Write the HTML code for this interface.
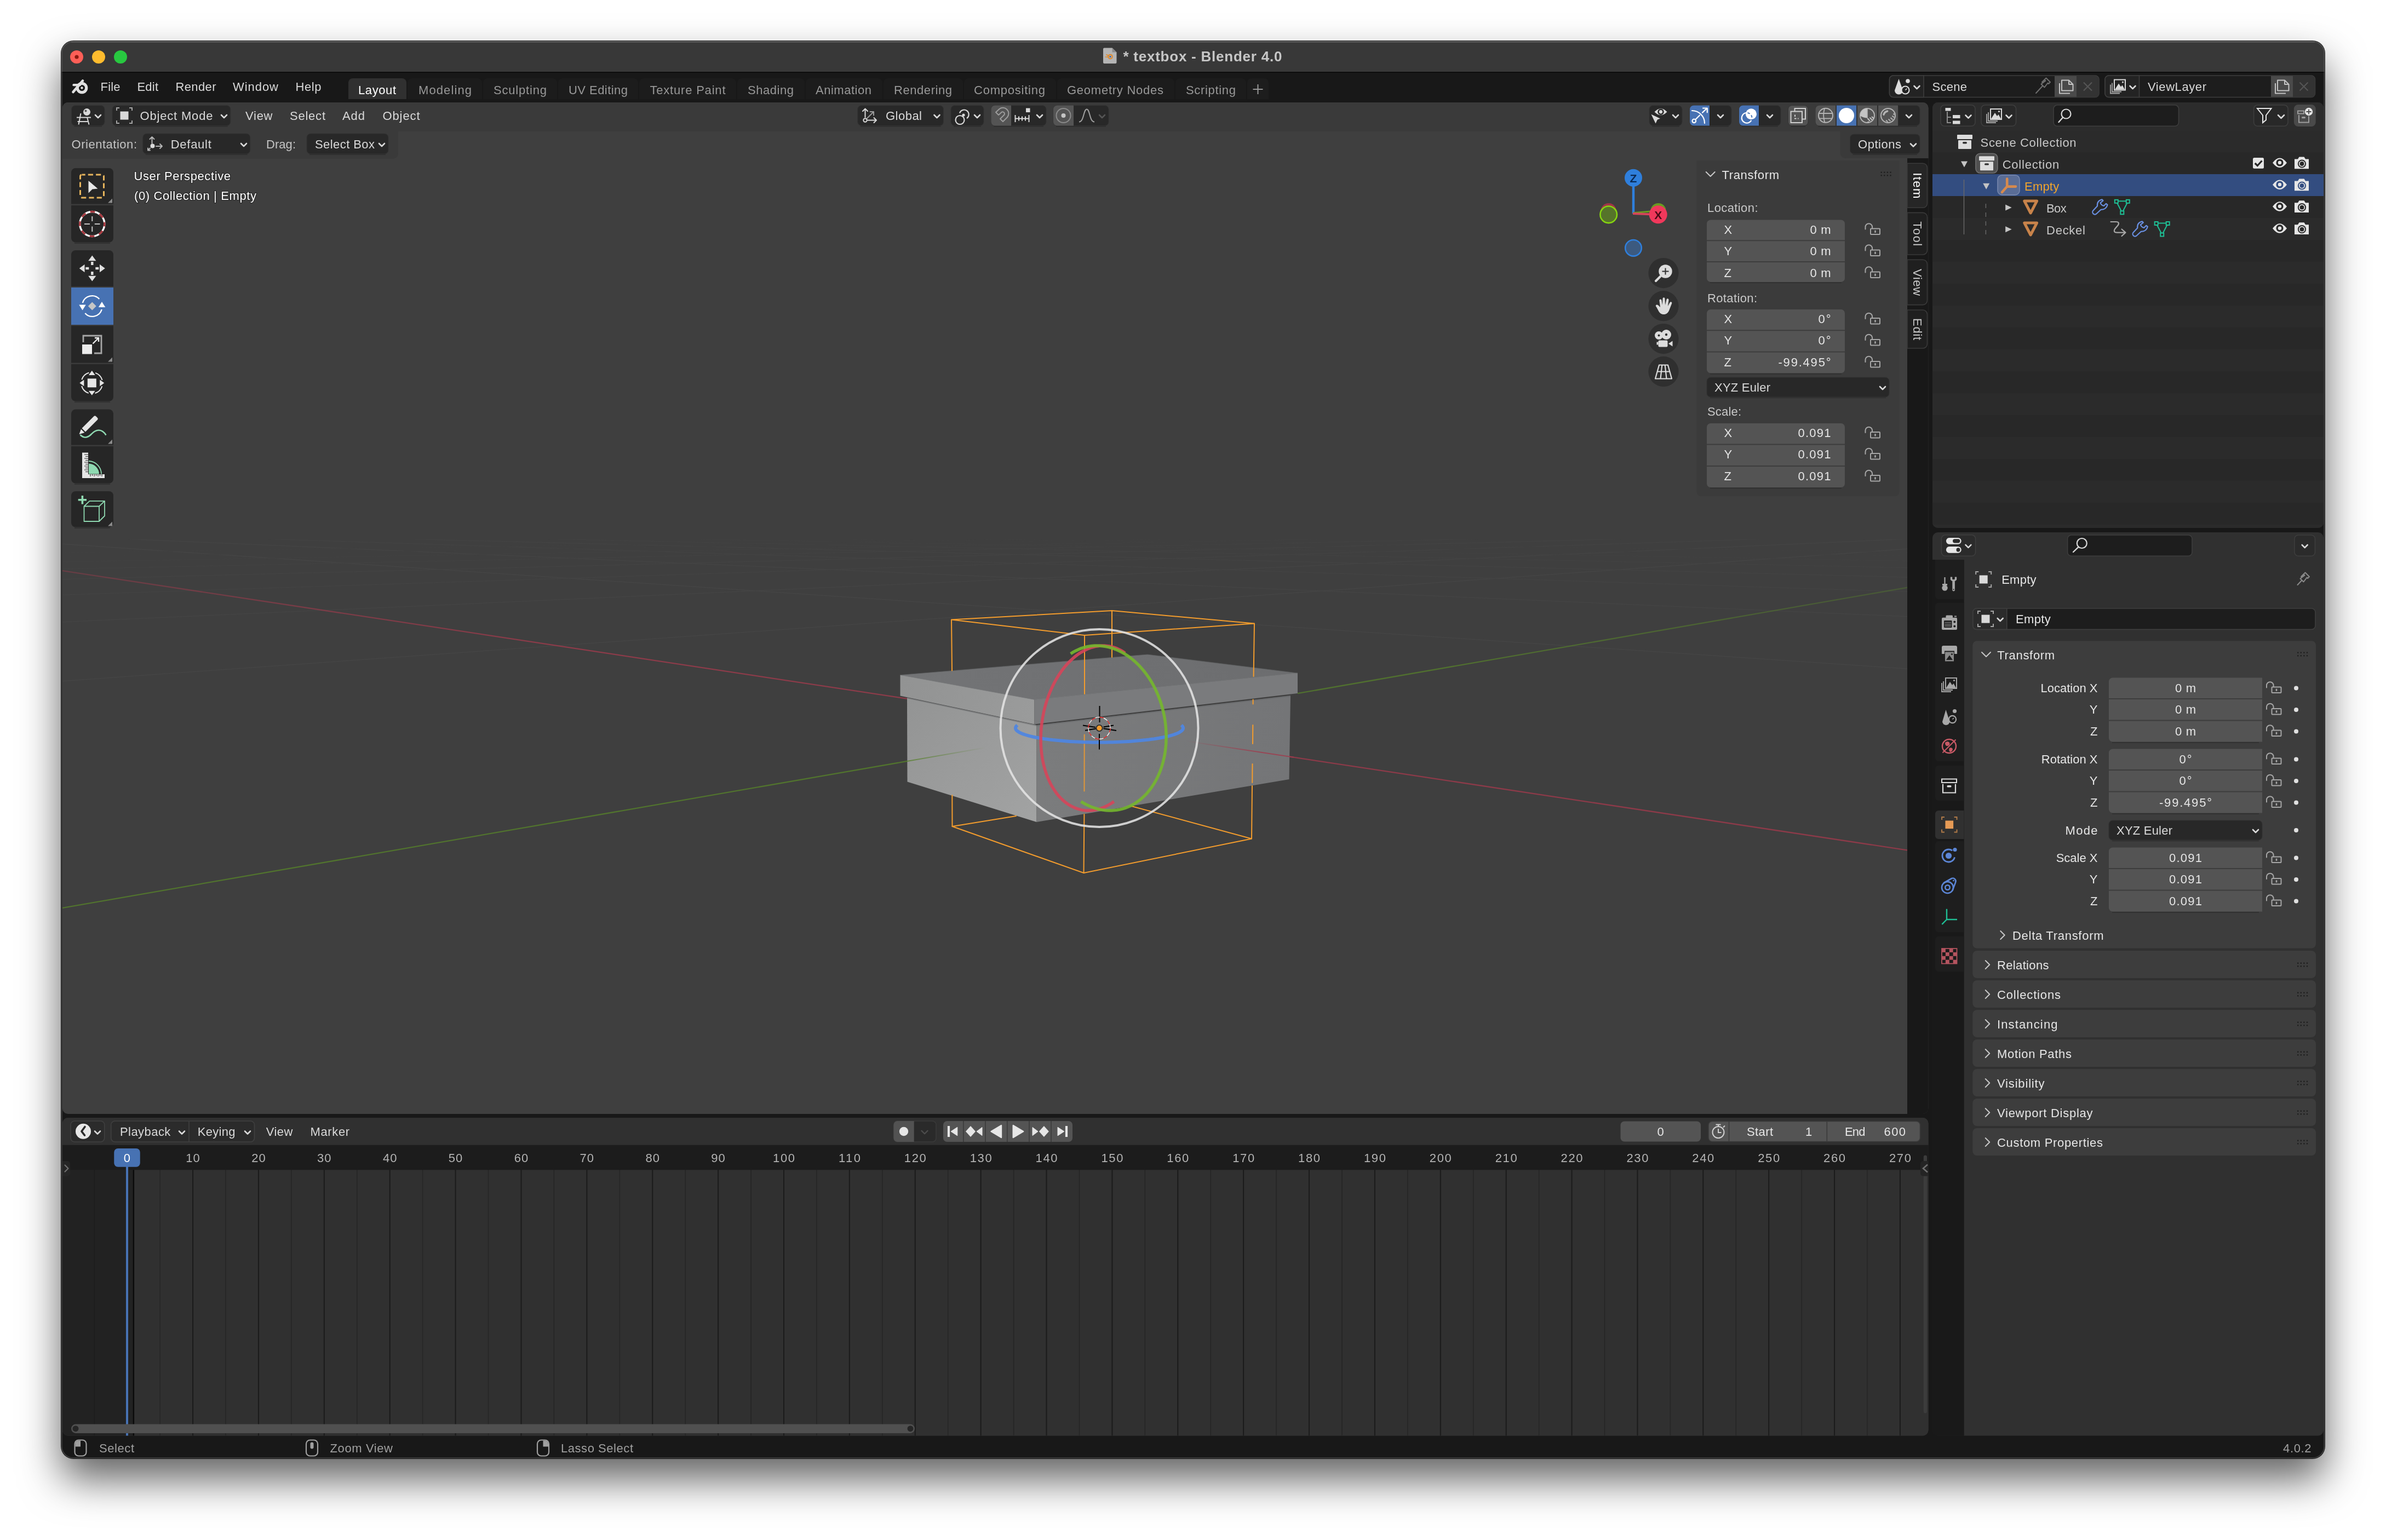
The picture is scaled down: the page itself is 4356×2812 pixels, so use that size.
<!DOCTYPE html>
<html><head><meta charset="utf-8"><title>textbox - Blender 4.0</title>
<style>
html,body{margin:0;padding:0;background:#fff;}
body{width:4356px;height:2812px;position:relative;overflow:hidden;}
#shadow{position:absolute;left:112px;top:75px;width:4132px;height:2588px;border-radius:22px;
 box-shadow:0 0 0 1px rgba(0,0,0,0.85), 0 38px 74px rgba(0,0,0,0.62);background:#181818;}
svg{position:absolute;left:0;top:0;font-family:"Liberation Sans",sans-serif;will-change:transform;}
</style></head><body>
<div id="shadow"></div>
<svg width="4356" height="2812" viewBox="0 0 4356 2812">
<defs><clipPath id="win"><rect x="112" y="75" width="4132" height="2588" rx="22"/></clipPath></defs>
<g clip-path="url(#win)">
<rect x="112" y="75" width="4132" height="2588" fill="#181818" />
<rect x="112" y="75" width="4132" height="57" fill="#383838" />
<line x1="112" y1="132" x2="4244" y2="132" stroke="#0d0d0d" stroke-width="2" />
<circle cx="140" cy="104" r="12" fill="#fe5f57" />
<circle cx="140" cy="104" r="3.6" fill="#8c1a10" />
<circle cx="180" cy="104" r="12" fill="#febc2e" />
<circle cx="220" cy="104" r="12" fill="#28c840" />
<path d="M2016 87.6 h14.5 l8 8 v18.4 a2 2 0 0 1 -2 2 h-20.5 a2 2 0 0 1 -2 -2 v-24.4 a2 2 0 0 1 2 -2 z" fill="#b4b4b4" />
<path d="M2030.5 87.6 l8 8 h-8 z" fill="#8a8a8a" />
<circle cx="2027" cy="103.5" r="3.7" fill="none" stroke="#e08a2c" stroke-width="2.2" />
<path d="M2017.5 104 h6 M2019.5 99.5 l5.5 3" fill="none" stroke="#e08a2c" stroke-width="1.7" />
<circle cx="2027" cy="103.5" r="1.5" fill="#2d5fa8" />
<text x="2050.4" y="111.5" font-size="26" fill="#c6c6c6" textLength="290" lengthAdjust="spacing" font-weight="bold" >* textbox - Blender 4.0</text>
<line x1="130" y1="76.6" x2="4226" y2="76.6" stroke="#787878" stroke-width="1.4" opacity="0.8" />
<g fill="none" stroke="#e0e0e0" stroke-linecap="round">
<circle cx="149.5" cy="160.5" r="8.2" fill="none" stroke="#e0e0e0" stroke-width="5.2" />
<circle cx="149.5" cy="160.5" r="2.2" fill="#e0e0e0" stroke="none" stroke-width="0" />
<path d="M133.5 168 L151 147.5" fill="none" stroke="#e0e0e0" stroke-width="4.6" />
<path d="M134.5 155.2 H146" fill="none" stroke="#e0e0e0" stroke-width="4.2" />
</g>
<text x="183.5" y="166" font-size="22" fill="#d9d9d9" textLength="36" lengthAdjust="spacing" >File</text>
<text x="250.5" y="166" font-size="22" fill="#d9d9d9" textLength="38.5" lengthAdjust="spacing" >Edit</text>
<text x="320.5" y="166" font-size="22" fill="#d9d9d9" textLength="74" lengthAdjust="spacing" >Render</text>
<text x="425" y="166" font-size="22" fill="#d9d9d9" textLength="83" lengthAdjust="spacing" >Window</text>
<text x="539.5" y="166" font-size="22" fill="#d9d9d9" textLength="47" lengthAdjust="spacing" >Help</text>
<path d="M636 181 V151 a8 8 0 0 1 8 -8 H734 a8 8 0 0 1 8 8 V181 z" fill="#303030" />
<text x="654" y="172" font-size="22" fill="#ffffff" textLength="69" lengthAdjust="spacing" >Layout</text>
<path d="M744 181 V151 a8 8 0 0 1 8 -8 H872 a8 8 0 0 1 8 8 V181 z" fill="#1c1c1c" />
<text x="764" y="172" font-size="22" fill="#989898" textLength="97" lengthAdjust="spacing" >Modeling</text>
<path d="M882 181 V151 a8 8 0 0 1 8 -8 H1009 a8 8 0 0 1 8 8 V181 z" fill="#1c1c1c" />
<text x="901" y="172" font-size="22" fill="#989898" textLength="97" lengthAdjust="spacing" >Sculpting</text>
<path d="M1019 181 V151 a8 8 0 0 1 8 -8 H1157 a8 8 0 0 1 8 8 V181 z" fill="#1c1c1c" />
<text x="1038" y="172" font-size="22" fill="#989898" textLength="108" lengthAdjust="spacing" >UV Editing</text>
<path d="M1167 181 V151 a8 8 0 0 1 8 -8 H1336 a8 8 0 0 1 8 8 V181 z" fill="#1c1c1c" />
<text x="1186.5" y="172" font-size="22" fill="#989898" textLength="138" lengthAdjust="spacing" >Texture Paint</text>
<path d="M1346 181 V151 a8 8 0 0 1 8 -8 H1461 a8 8 0 0 1 8 8 V181 z" fill="#1c1c1c" />
<text x="1365" y="172" font-size="22" fill="#989898" textLength="84" lengthAdjust="spacing" >Shading</text>
<path d="M1471 181 V151 a8 8 0 0 1 8 -8 H1603 a8 8 0 0 1 8 8 V181 z" fill="#1c1c1c" />
<text x="1489" y="172" font-size="22" fill="#989898" textLength="102" lengthAdjust="spacing" >Animation</text>
<path d="M1613 181 V151 a8 8 0 0 1 8 -8 H1750 a8 8 0 0 1 8 8 V181 z" fill="#1c1c1c" />
<text x="1632" y="172" font-size="22" fill="#989898" textLength="106" lengthAdjust="spacing" >Rendering</text>
<path d="M1760 181 V151 a8 8 0 0 1 8 -8 H1920 a8 8 0 0 1 8 8 V181 z" fill="#1c1c1c" />
<text x="1778" y="172" font-size="22" fill="#989898" textLength="130" lengthAdjust="spacing" >Compositing</text>
<path d="M1930 181 V151 a8 8 0 0 1 8 -8 H2136 a8 8 0 0 1 8 8 V181 z" fill="#1c1c1c" />
<text x="1948" y="172" font-size="22" fill="#989898" textLength="176" lengthAdjust="spacing" >Geometry Nodes</text>
<path d="M2146 181 V151 a8 8 0 0 1 8 -8 H2267 a8 8 0 0 1 8 8 V181 z" fill="#1c1c1c" />
<text x="2165" y="172" font-size="22" fill="#989898" textLength="91" lengthAdjust="spacing" >Scripting</text>
<path d="M2277 181 V151 a8 8 0 0 1 8 -8 H2308 a8 8 0 0 1 8 8 V181 z" fill="#1d1d1d" />
<path d="M2287.5 163 h18 M2296.5 154 v18" fill="none" stroke="#989898" stroke-width="2" />
<defs><clipPath id="v3d"><rect x="114" y="187" width="3406.5" height="1847" rx="10"/></clipPath><clipPath id="tl"><rect x="114" y="2041" width="3406.5" height="580.5" rx="10"/></clipPath><clipPath id="ol"><rect x="3528" y="187" width="714" height="777" rx="10"/></clipPath><clipPath id="pr"><rect x="3528" y="972" width="714" height="1649.5" rx="10"/></clipPath></defs>
<rect x="114" y="187" width="3406.5" height="1847" fill="#3f3f3f" rx="10" />
<g clip-path="url(#ol)">
<rect x="3528" y="187" width="714" height="777" fill="#282828" />
<rect x="3528" y="280" width="714" height="40" fill="#2b2b2b" />
<rect x="3528" y="360" width="714" height="40" fill="#2b2b2b" />
<rect x="3528" y="440" width="714" height="40" fill="#2b2b2b" />
<rect x="3528" y="520" width="714" height="40" fill="#2b2b2b" />
<rect x="3528" y="600" width="714" height="40" fill="#2b2b2b" />
<rect x="3528" y="680" width="714" height="40" fill="#2b2b2b" />
<rect x="3528" y="760" width="714" height="40" fill="#2b2b2b" />
<rect x="3528" y="840" width="714" height="40" fill="#2b2b2b" />
<rect x="3528" y="920" width="714" height="40" fill="#2b2b2b" />
<rect x="3528" y="187" width="714" height="53" fill="#303030" />
</g>
<g clip-path="url(#pr)">
<rect x="3528" y="972" width="714" height="1650" fill="#303030" />
<rect x="3528" y="1022" width="57.5" height="1600" fill="#1c1c1c" />
</g>
<g clip-path="url(#tl)">
<rect x="114" y="2041" width="3407" height="581" fill="#2f2f2f" />
</g>
<rect x="136.5" y="2629.5" width="21" height="29" fill="none" rx="7" stroke="#a0a0a0" stroke-width="2.2" />
<path d="M137.5 2641.5 V2636.5 a6 6 0 0 1 6 -6 h3.5 v11 z" fill="#a0a0a0" />
<text x="181" y="2652" font-size="22" fill="#a0a0a0" textLength="64" lengthAdjust="spacing" >Select</text>
<rect x="559" y="2629.5" width="21" height="29" fill="none" rx="7" stroke="#a0a0a0" stroke-width="2.2" />
<rect x="566.5" y="2633.5" width="6" height="12" fill="#a0a0a0" rx="3" />
<text x="602.5" y="2652" font-size="22" fill="#a0a0a0" textLength="114.5" lengthAdjust="spacing" >Zoom View</text>
<rect x="981" y="2629.5" width="21" height="29" fill="none" rx="7" stroke="#a0a0a0" stroke-width="2.2" />
<path d="M1001 2641.5 V2636.5 a6 6 0 0 0 -6 -6 h-3.5 v11 z" fill="#a0a0a0" />
<text x="1024" y="2652" font-size="22" fill="#a0a0a0" textLength="132" lengthAdjust="spacing" >Lasso Select</text>
<text x="4168" y="2652" font-size="22" fill="#a0a0a0" textLength="51.5" lengthAdjust="spacing" >4.0.2</text>
<g clip-path="url(#v3d)">
<defs><clipPath id="belowhz"><rect x="100" y="985" width="3440" height="1100"/></clipPath></defs>
<g clip-path="url(#belowhz)">
<line x1="100" y1="1244.71" x2="3530" y2="998.931" stroke="#454545" stroke-width="1.5" />
<line x1="100" y1="992.42" x2="3530" y2="1224.34" stroke="#454545" stroke-width="1.5" />
<line x1="100" y1="1136.45" x2="3530" y2="981.885" stroke="#444444" stroke-width="1.5" />
<line x1="100" y1="978.399" x2="3530" y2="1127.83" stroke="#444444" stroke-width="1.5" />
<line x1="100" y1="1086.63" x2="3530" y2="974.041" stroke="#434343" stroke-width="1.5" />
<line x1="100" y1="971.738" x2="3530" y2="1081.98" stroke="#434343" stroke-width="1.5" />
<line x1="100" y1="1058" x2="3530" y2="969.533" stroke="#434343" stroke-width="1.5" />
<line x1="100" y1="967.845" x2="3530" y2="1055.19" stroke="#434343" stroke-width="1.5" />
<line x1="100" y1="1039.4" x2="3530" y2="966.605" stroke="#424242" stroke-width="1.5" />
<line x1="100" y1="965.293" x2="3530" y2="1037.62" stroke="#424242" stroke-width="1.5" />
<line x1="100" y1="1026.35" x2="3530" y2="964.55" stroke="#414141" stroke-width="1.5" />
<line x1="100" y1="963.49" x2="3530" y2="1025.21" stroke="#414141" stroke-width="1.5" />
<line x1="100" y1="1016.69" x2="3530" y2="963.029" stroke="#404040" stroke-width="1.5" />
<line x1="100" y1="962.149" x2="3530" y2="1015.97" stroke="#404040" stroke-width="1.5" />
<line x1="100" y1="1009.25" x2="3530" y2="961.857" stroke="#404040" stroke-width="1.5" />
<line x1="100" y1="961.112" x2="3530" y2="1008.84" stroke="#404040" stroke-width="1.5" />
</g>
<defs><linearGradient id="gfade" gradientUnits="userSpaceOnUse" x1="1640" y1="0" x2="1800" y2="0"><stop offset="0" stop-color="#56802a" stop-opacity="0.85"/><stop offset="1" stop-color="#56802a" stop-opacity="0"/></linearGradient><linearGradient id="rfade" gradientUnits="userSpaceOnUse" x1="2165" y1="0" x2="2300" y2="0"><stop offset="0" stop-color="#a03a4c" stop-opacity="0"/><stop offset="1" stop-color="#a03a4c" stop-opacity="0.8"/></linearGradient></defs>
<defs><linearGradient id="rl" gradientUnits="userSpaceOnUse" x1="100" y1="0" x2="1658" y2="0"><stop offset="0" stop-color="#a03a4c" stop-opacity="0.4"/><stop offset="0.6" stop-color="#a03a4c" stop-opacity="0.8"/></linearGradient><linearGradient id="gr" gradientUnits="userSpaceOnUse" x1="2369" y1="0" x2="3530" y2="0"><stop offset="0.25" stop-color="#56802a" stop-opacity="0.75"/><stop offset="1" stop-color="#56802a" stop-opacity="0.35"/></linearGradient></defs>
<line x1="100" y1="1040.09" x2="1658" y2="1276.13" stroke="url(#rl)" stroke-width="2.3" />
<line x1="2300" y1="1373.39" x2="3530" y2="1559.73" stroke="#a03a4c" stroke-width="2.3" opacity="0.8" />
<line x1="100" y1="1660.25" x2="1656" y2="1389.97" stroke="#56802a" stroke-width="2.3" opacity="0.8" />
<line x1="2369" y1="1266.12" x2="3530" y2="1064.45" stroke="url(#gr)" stroke-width="2.3" />
<defs><linearGradient id="ltop" x1="0" y1="0" x2="1" y2="0"><stop offset="0" stop-color="#737476"/><stop offset="1" stop-color="#6c6d6f"/></linearGradient><linearGradient id="lleft" x1="0" y1="0" x2="1" y2="0"><stop offset="0" stop-color="#929393"/><stop offset="1" stop-color="#9a9b9b"/></linearGradient><linearGradient id="bleft" x1="0" y1="0" x2="1" y2="1"><stop offset="0" stop-color="#939494"/><stop offset="1" stop-color="#a2a3a3"/></linearGradient><linearGradient id="bright" x1="0" y1="0" x2="1" y2="0"><stop offset="0" stop-color="#7b7c7d"/><stop offset="1" stop-color="#747577"/></linearGradient></defs>
<path d="M1656 1274 L1892.5 1324 L1892.5 1501 L1656.5 1427.5 Z" fill="url(#bleft)" />
<path d="M1892.5 1324 L2356 1270 L2353.5 1423 L1892.5 1501 Z" fill="url(#bright)" />
<path d="M1656 1274.5 L1892.5 1325 L2356 1271" fill="none" stroke="#606163" stroke-width="2.2" opacity="0.42" />
<path d="M1643.5 1232.5 L2095 1195 L2369 1229 L1888.5 1277.5 Z" fill="url(#ltop)" />
<path d="M1643.5 1232.5 L1888.5 1277.5 L1888.5 1322.5 L1643.5 1270.5 Z" fill="url(#lleft)" />
<path d="M1888.5 1277.5 L2369 1229 L2369 1266 L1888.5 1322.5 Z" fill="#7a7b7d" />
<path d="M1643.5 1232.5 L1888.5 1277.5 L2369 1229" fill="none" stroke="#7d7e80" stroke-width="1.2" opacity="0.6" />
<path d="M1643.5 1232.5 L2095 1195 L2369 1229" fill="none" stroke="#5a5b5c" stroke-width="1.2" opacity="0.7" />
<line x1="1656" y1="1389.97" x2="1800" y2="1364.96" stroke="url(#gfade)" stroke-width="2" />
<line x1="2165" y1="1352.94" x2="2362" y2="1382.78" stroke="url(#rfade)" stroke-width="2" />
<g stroke="#f39c2d" stroke-width="2" fill="none" stroke-linecap="round">
<path d="M1737 1131.5 L2030 1115 L2290 1138.5 L1980 1160 Z"/>
<path d="M1737 1131.5 L1738 1224.5 M1738.3 1452 L1738.5 1509"/>
<path d="M2030 1115 L2030 1200"/>
<path d="M1980 1160 L1980 1267 M1979.4 1487 L1978.5 1594"/>
<path d="M1979.7 1341.5 L1979.5 1444.5" opacity="0.85"/>
<path d="M2290 1138.5 L2288.6 1235 M2287.6 1277.5 V1285.5 M2287.3 1324 L2287 1358 M2286.5 1395 L2286.2 1429 M2286 1435 L2285 1531.5"/>
<path d="M1738.5 1509 L1978.5 1594 L2285 1531.5 L2064.7 1471.7 M1738.5 1509 L1855 1490"/>
</g>
<path d="M2156.7 1324.1 L2157.8 1325.1 L2158.7 1326.1 L2159.4 1327.1 L2159.8 1328.2 L2160.0 1329.2 L2159.9 1330.2 L2159.7 1331.3 L2159.1 1332.3 L2158.4 1333.3 L2157.4 1334.3 L2156.1 1335.3 L2154.6 1336.3 L2152.9 1337.3 L2151.0 1338.3 L2148.9 1339.2 L2146.5 1340.2 L2143.9 1341.1 L2141.1 1342.0 L2138.1 1342.9 L2134.8 1343.8 L2131.4 1344.6 L2127.8 1345.5 L2124.0 1346.3 L2120.0 1347.0 L2115.8 1347.8 L2111.5 1348.5 L2107.0 1349.2 L2102.3 1349.8 L2097.5 1350.5 L2092.6 1351.1 L2087.5 1351.6 L2082.3 1352.1 L2076.9 1352.6 L2071.5 1353.1 L2066.0 1353.5 L2060.3 1353.9 L2054.6 1354.2 L2048.8 1354.5 L2043.0 1354.8 L2037.1 1355.0 L2031.1 1355.2 L2025.1 1355.3 L2019.1 1355.4 L2013.1 1355.5 L2007.0 1355.5 L2000.9 1355.5 L1994.9 1355.4 L1988.9 1355.3 L1982.9 1355.2 L1976.9 1355.0 L1971.0 1354.8 L1965.2 1354.5 L1959.4 1354.2 L1953.7 1353.9 L1948.0 1353.5 L1942.5 1353.1 L1937.1 1352.6 L1931.7 1352.1 L1926.5 1351.6 L1921.4 1351.1 L1916.5 1350.5 L1911.7 1349.8 L1907.0 1349.2 L1902.5 1348.5 L1898.2 1347.8 L1894.0 1347.0 L1890.0 1346.3 L1886.2 1345.5 L1882.6 1344.6 L1879.2 1343.8 L1875.9 1342.9 L1872.9 1342.0 L1870.1 1341.1 L1867.5 1340.2 L1865.1 1339.2 L1863.0 1338.3 L1861.1 1337.3 L1859.4 1336.3 L1857.9 1335.3 L1856.6 1334.3 L1855.6 1333.3 L1854.9 1332.3 L1854.3 1331.3 L1854.1 1330.2 L1854.0 1329.2 L1854.2 1328.2 L1854.6 1327.1 L1855.3 1326.1 L1856.2 1325.1 L1857.3 1324.1" fill="none" stroke="#4f86e0" stroke-width="6" stroke-linecap="butt" opacity="0.95" />
<path d="M2054.0 1192.6 L2050.2 1189.9 L2046.2 1187.5 L2042.1 1185.4 L2038.0 1183.6 L2033.8 1182.1 L2029.5 1180.9 L2025.1 1180.0 L2020.7 1179.4 L2016.3 1179.0 L2011.8 1179.0 L2007.4 1179.3 L2002.9 1179.9 L1998.3 1180.8 L1993.8 1182.0 L1989.4 1183.5 L1984.9 1185.3 L1980.5 1187.4 L1976.1 1189.8 L1971.7 1192.4 L1967.4 1195.3 L1963.2 1198.5 L1959.1 1202.0 L1955.0 1205.7 L1951.0 1209.7 L1947.1 1213.9 L1943.4 1218.3 L1939.7 1223.0 L1936.2 1227.9 L1932.8 1233.0 L1929.6 1238.2 L1926.4 1243.7 L1923.5 1249.3 L1920.7 1255.1 L1918.0 1261.1 L1915.5 1267.2 L1913.2 1273.4 L1911.1 1279.7 L1909.1 1286.1 L1907.3 1292.6 L1905.7 1299.2 L1904.4 1305.9 L1903.2 1312.5 L1902.1 1319.3 L1901.3 1326.0 L1900.7 1332.8 L1900.3 1339.5 L1900.1 1346.3 L1900.1 1353.0 L1900.3 1359.6 L1900.7 1366.2 L1901.3 1372.7 L1902.1 1379.1 L1903.1 1385.5 L1904.3 1391.7 L1905.7 1397.8 L1907.3 1403.7 L1909.1 1409.5 L1911.0 1415.2 L1913.2 1420.6 L1915.5 1425.9 L1917.9 1431.0 L1920.6 1435.9 L1923.4 1440.5 L1926.4 1445.0 L1929.5 1449.2 L1932.7 1453.2 L1936.1 1456.9 L1939.7 1460.4 L1943.3 1463.6 L1947.1 1466.5 L1950.9 1469.2 L1954.9 1471.5 L1959.0 1473.6 L1963.1 1475.4 L1967.3 1476.9 L1971.6 1478.1 L1976.0 1479.1 L1980.4 1479.7 L1984.8 1480.0 L1989.3 1480.0 L1993.7 1479.7 L1998.2 1479.1 L2002.8 1478.1 L2007.3 1476.9 L2011.7 1475.4 L2016.2 1473.6 L2020.6 1471.6 L2025.0 1469.2 L2029.4 1466.5 L2033.7 1463.6" fill="none" stroke="#d6455a" stroke-width="5.5" opacity="0.9" />
<path d="M1954.6 1193.7 L1959.0 1190.9 L1963.6 1188.4 L1968.3 1186.2 L1973.1 1184.2 L1977.9 1182.6 L1982.8 1181.3 L1987.8 1180.3 L1992.9 1179.5 L1998.0 1179.1 L2003.1 1179.0 L2008.3 1179.2 L2013.4 1179.7 L2018.6 1180.5 L2023.8 1181.6 L2028.9 1183.0 L2034.0 1184.7 L2039.1 1186.7 L2044.1 1189.0 L2049.1 1191.6 L2054.0 1194.4 L2058.8 1197.6 L2063.5 1200.9 L2068.1 1204.6 L2072.6 1208.5 L2077.0 1212.7 L2081.3 1217.1 L2085.4 1221.7 L2089.4 1226.5 L2093.2 1231.6 L2096.9 1236.8 L2100.4 1242.3 L2103.8 1247.9 L2106.9 1253.7 L2109.9 1259.6 L2112.6 1265.7 L2115.2 1271.9 L2117.6 1278.2 L2119.7 1284.7 L2121.7 1291.2 L2123.4 1297.8 L2124.9 1304.4 L2126.2 1311.2 L2127.2 1317.9 L2128.1 1324.7 L2128.6 1331.5 L2129.0 1338.3 L2129.1 1345.0 L2129.0 1351.7 L2128.7 1358.4 L2128.1 1365.1 L2127.3 1371.6 L2126.3 1378.1 L2125.0 1384.5 L2123.5 1390.7 L2121.8 1396.8 L2119.9 1402.8 L2117.8 1408.7 L2115.4 1414.4 L2112.9 1419.9 L2110.1 1425.2 L2107.2 1430.4 L2104.0 1435.3 L2100.7 1440.0 L2097.2 1444.5 L2093.6 1448.8 L2089.8 1452.8 L2085.8 1456.5 L2081.7 1460.1 L2077.4 1463.3 L2073.0 1466.3 L2068.5 1469.0 L2063.9 1471.4 L2059.2 1473.5 L2054.4 1475.3 L2049.5 1476.8 L2044.5 1478.1 L2039.5 1479.0 L2034.5 1479.6 L2029.4 1480.0 L2024.2 1480.0 L2019.1 1479.7 L2013.9 1479.1 L2008.7 1478.2 L2003.6 1477.0 L1998.4 1475.5 L1993.3 1473.7 L1988.3 1471.6 L1983.3 1469.2 L1978.3 1466.5 L1973.5 1463.6" fill="none" stroke="#74b72e" stroke-width="5.5" opacity="0.9" />
<circle cx="2007" cy="1329.5" r="180.5" fill="none" stroke="#e4e4e4" stroke-width="4" opacity="0.88" />
<g stroke="#000" stroke-width="2" fill="none">
<path d="M2007.5 1289 V1319 M2007 1340 V1368.5"/>
<path d="M1977 1324.5 L2000 1328 M1981 1333.7 L2001 1330.5 M2014.5 1327.5 L2033 1324.5 M2014.5 1330.3 L2038 1334"/>
</g>
<circle cx="2007" cy="1329.5" r="20" fill="none" stroke="#ffffff" stroke-width="1.3" />
<circle cx="2007" cy="1329.5" r="20" fill="none" stroke="#e01010" stroke-width="1.3" stroke-dasharray="7.85 7.85"/>
<circle cx="2007" cy="1329.5" r="5.6" fill="#f39c2d" stroke="#2a2a2a" stroke-width="1.8" />
</g>
<g clip-path="url(#v3d)">
<rect x="114" y="187" width="3407" height="53" fill="#3a3a3a" />
<path d="M114 240 H727 V280 a10 10 0 0 1 -10 10 H114 Z" fill="#3a3a3a" />
<path d="M3521 240 H3359.5 V279 a10 10 0 0 0 10 10 H3521 Z" fill="#3a3a3a" />
<rect x="3482" y="289" width="39" height="1746" fill="#181818" />
</g>
<rect x="130.5" y="192.5" width="60.5" height="37" fill="#282828" rx="7" stroke="#333333" stroke-width="1" />
<line x1="135.5" y1="230.7" x2="186" y2="230.7" stroke="#2a2a2a" stroke-width="1.5" opacity="0.8" />
<g stroke="#d9d9d9" stroke-width="2" fill="none">
<path d="M140 214.5 H166 M141.5 222 H160 M147.5 207 L143.5 227.5 M159 214 L162.5 227.5"/>
</g>
<circle cx="158.5" cy="204.5" r="6.5" fill="#d9d9d9" />
<circle cx="156.5" cy="202.5" r="2" fill="#555" />
<path d="M174 210 L179 215 L184 210" fill="none" stroke="#d9d9d9" stroke-width="2.6" stroke-linecap="round" stroke-linejoin="round" />
<rect x="205" y="192.5" width="215.75" height="37" fill="#282828" rx="7" stroke="#333333" stroke-width="1" />
<line x1="210" y1="230.7" x2="415.75" y2="230.7" stroke="#2a2a2a" stroke-width="1.5" opacity="0.8" />
<path d="M213.0 202.0 V197.0 H218.0 M236.0 197.0 H241.0 V202.0 M241.0 220.0 V225.0 H236.0 M218.0 225.0 H213.0 V220.0" fill="none" stroke="#a4a4a4" stroke-width="2" />
<rect x="219.5" y="203.5" width="15" height="15" fill="#d9d9d9" />
<text x="255.5" y="219" font-size="22" fill="#d9d9d9" textLength="133" lengthAdjust="spacing" >Object Mode</text>
<path d="M404 210 L409 215 L414 210" fill="none" stroke="#d9d9d9" stroke-width="2.6" stroke-linecap="round" stroke-linejoin="round" />
<text x="448" y="219" font-size="22" fill="#d9d9d9" textLength="49.5" lengthAdjust="spacing" >View</text>
<text x="529" y="219" font-size="22" fill="#d9d9d9" textLength="65" lengthAdjust="spacing" >Select</text>
<text x="625" y="219" font-size="22" fill="#d9d9d9" textLength="41" lengthAdjust="spacing" >Add</text>
<text x="698.5" y="219" font-size="22" fill="#d9d9d9" textLength="68" lengthAdjust="spacing" >Object</text>
<text x="130.5" y="271" font-size="22" fill="#c4c4c4" textLength="119.5" lengthAdjust="spacing" >Orientation:</text>
<rect x="260.75" y="244" width="196" height="37" fill="#282828" rx="7" stroke="#333333" stroke-width="1" />
<line x1="265.75" y1="282.2" x2="451.75" y2="282.2" stroke="#2a2a2a" stroke-width="1.5" opacity="0.8" />
<g stroke="#b5b5b5" stroke-width="2" fill="none" stroke-linecap="round" stroke-linejoin="round">
<path d="M277.5 262 V250 M273.5 254 L277.5 250 L281.5 254 M285 267 H296 M292 263 L296 267 L292 271 M274 270.5 L270 274.5 M270 270.5 V274.5 H274"/>
</g>
<circle cx="278.5" cy="266.5" r="4" fill="#d9d9d9" />
<text x="311.75" y="271" font-size="22" fill="#d9d9d9" textLength="74" lengthAdjust="spacing" >Default</text>
<path d="M440 262 L445 267 L450 262" fill="none" stroke="#d9d9d9" stroke-width="2.6" stroke-linecap="round" stroke-linejoin="round" />
<text x="486" y="271" font-size="22" fill="#c4c4c4" textLength="54" lengthAdjust="spacing" >Drag:</text>
<rect x="560" y="244" width="149" height="37" fill="#282828" rx="7" stroke="#333333" stroke-width="1" />
<line x1="565" y1="282.2" x2="704" y2="282.2" stroke="#2a2a2a" stroke-width="1.5" opacity="0.8" />
<text x="575" y="271" font-size="22" fill="#d9d9d9" textLength="109" lengthAdjust="spacing" >Select Box</text>
<path d="M692 262 L697 267 L702 262" fill="none" stroke="#d9d9d9" stroke-width="2.6" stroke-linecap="round" stroke-linejoin="round" />
<rect x="1565.75" y="192.5" width="156.75" height="37" fill="#282828" rx="7" stroke="#333333" stroke-width="1" />
<line x1="1570.75" y1="230.7" x2="1717.5" y2="230.7" stroke="#2a2a2a" stroke-width="1.5" opacity="0.8" />
<g stroke="#d9d9d9" stroke-width="2" fill="none" stroke-linecap="round" stroke-linejoin="round">
<path d="M1579.5 214 V198.5 M1575 203 L1579.5 198.5 L1584 203 M1584 219.5 H1600 M1595.5 215 L1600 219.5 L1595.5 224"/>
<path d="M1583 216 L1594.5 204.5 M1588.5 204 H1595 V210.5" stroke="#9a9a9a"/>
</g>
<circle cx="1579.5" cy="219.5" r="3.2" fill="#282828" stroke="#d9d9d9" stroke-width="2" />
<text x="1617" y="219" font-size="22" fill="#d9d9d9" textLength="66" lengthAdjust="spacing" >Global</text>
<path d="M1705.5 210 L1710.5 215 L1715.5 210" fill="none" stroke="#d9d9d9" stroke-width="2.6" stroke-linecap="round" stroke-linejoin="round" />
<rect x="1736" y="192.5" width="60" height="37" fill="#282828" rx="7" stroke="#333333" stroke-width="1" />
<line x1="1741" y1="230.7" x2="1791" y2="230.7" stroke="#2a2a2a" stroke-width="1.5" opacity="0.8" />
<circle cx="1752.5" cy="219" r="8" fill="none" stroke="#d9d9d9" stroke-width="2.2" />
<path d="M1752 206.5 A8.5 8.5 0 1 1 1765 216" fill="none" stroke="#d9d9d9" stroke-width="2.2" />
<circle cx="1759" cy="210" r="2.6" fill="#d9d9d9" />
<path d="M1779 210 L1784 215 L1789 210" fill="none" stroke="#d9d9d9" stroke-width="2.6" stroke-linecap="round" stroke-linejoin="round" />
<rect x="1809.5" y="192.5" width="100.5" height="37" fill="#282828" rx="7" stroke="#333333" stroke-width="1" />
<line x1="1814.5" y1="230.7" x2="1905" y2="230.7" stroke="#2a2a2a" stroke-width="1.5" opacity="0.8" />
<path d="M1809.5 199.5 a7 7 0 0 1 7 -7 H1846 V229.5 H1816.5 a7 7 0 0 1 -7 -7 Z" fill="#545454" />
<line x1="1846.5" y1="192.5" x2="1846.5" y2="229.5" stroke="#2a2a2a" stroke-width="1" />
<path d="M1818 205 L1824.5 199 a10.5 10.5 0 0 1 14.5 15 L1831 222 L1826 217 L1833.5 209.5 a3.6 3.6 0 0 0 -4.5 -5 L1823 210 Z" fill="none" stroke="#9c9c9c" stroke-width="2" stroke-linejoin="round" />
<g stroke="#d9d9d9" stroke-width="2" fill="none">
<path d="M1853.5 216.5 H1878.5 M1853.5 210 V223 M1860 212.5 V220.5 M1866 212.5 V220.5 M1872 212.5 V220.5 M1878.5 210 V223"/>
</g>
<rect x="1873" y="197.5" width="7.5" height="7.5" fill="#d9d9d9" />
<path d="M1893 210 L1898 215 L1903 210" fill="none" stroke="#d9d9d9" stroke-width="2.6" stroke-linecap="round" stroke-linejoin="round" />
<rect x="1923" y="192.5" width="101" height="37" fill="#282828" rx="7" stroke="#333333" stroke-width="1" />
<line x1="1928" y1="230.7" x2="2019" y2="230.7" stroke="#2a2a2a" stroke-width="1.5" opacity="0.8" />
<path d="M1923 199.5 a7 7 0 0 1 7 -7 H1960 V229.5 H1930 a7 7 0 0 1 -7 -7 Z" fill="#545454" />
<line x1="1960.5" y1="192.5" x2="1960.5" y2="229.5" stroke="#2a2a2a" stroke-width="1" />
<circle cx="1941.5" cy="211" r="13" fill="none" stroke="#8a8a8a" stroke-width="2" />
<circle cx="1941.5" cy="211" r="4" fill="#c4c4c4" />
<path d="M1970 222.5 C1979 222.5 1978 199.5 1984 199.5 C1990 199.5 1989 222.5 1998 222.5" fill="none" stroke="#a0a0a0" stroke-width="2" />
<path d="M2007 210 L2012 215 L2017 210" fill="none" stroke="#555555" stroke-width="2.6" stroke-linecap="round" stroke-linejoin="round" />
<rect x="3011" y="192.5" width="60" height="37" fill="#282828" rx="7" stroke="#333333" stroke-width="1" />
<line x1="3016" y1="230.7" x2="3066" y2="230.7" stroke="#2a2a2a" stroke-width="1.5" opacity="0.8" />
<path d="M3020.5 204.3 Q3032 192.3 3043.5 204.3 Q3032 216.3 3020.5 204.3 Z" fill="#d9d9d9" />
<circle cx="3032" cy="204.2" r="5.7" fill="#282828" />
<circle cx="3032" cy="204.2" r="3.1" fill="#d9d9d9" />
<path d="M3014.5 208.8 L3031 216.4 L3025.8 218.6 L3022.6 225.4 Z" fill="#d9d9d9" />
<path d="M3054 210 L3059 215 L3064 210" fill="none" stroke="#d9d9d9" stroke-width="2.6" stroke-linecap="round" stroke-linejoin="round" />
<rect x="3085" y="192.5" width="76" height="37" fill="#282828" rx="7" stroke="#333333" stroke-width="1" />
<line x1="3090" y1="230.7" x2="3156" y2="230.7" stroke="#2a2a2a" stroke-width="1.5" opacity="0.8" />
<path d="M3085 199.5 a7 7 0 0 1 7 -7 H3121 V229.5 H3092 a7 7 0 0 1 -7 -7 Z" fill="#4772b3" />
<line x1="3121.5" y1="192.5" x2="3121.5" y2="229.5" stroke="#222" stroke-width="1" />
<g stroke="#ffffff" stroke-width="2.2" fill="none" stroke-linecap="round" stroke-linejoin="round">
<path d="M3089 202 A23 23 0 0 1 3112 225 M3095.3 218.3 L3103 210.5 M3108 205.6 L3116.3 197.8 M3109 197.5 H3116.8 V205.3"/>
</g>
<circle cx="3092.8" cy="220.8" r="3.3" fill="#4772b3" stroke="#ffffff" stroke-width="2.2" />
<path d="M3136 210 L3141 215 L3146 210" fill="none" stroke="#d9d9d9" stroke-width="2.6" stroke-linecap="round" stroke-linejoin="round" />
<rect x="3175" y="192.5" width="76" height="37" fill="#282828" rx="7" stroke="#333333" stroke-width="1" />
<line x1="3180" y1="230.7" x2="3246" y2="230.7" stroke="#2a2a2a" stroke-width="1.5" opacity="0.8" />
<path d="M3175 199.5 a7 7 0 0 1 7 -7 H3211 V229.5 H3182 a7 7 0 0 1 -7 -7 Z" fill="#4772b3" />
<line x1="3211.5" y1="192.5" x2="3211.5" y2="229.5" stroke="#222" stroke-width="1" />
<circle cx="3197" cy="208.3" r="10" fill="#ffffff" />
<path d="M3190.5 206 A9.4 9.4 0 1 0 3197.5 219.5" fill="none" stroke="#ffffff" stroke-width="2.2" />
<path d="M3190.5 206 A9.4 9.4 0 0 1 3197.5 219.5" fill="none" stroke="#4772b3" stroke-width="2" stroke-dasharray="4.5 3.5"/>
<path d="M3226 210 L3231 215 L3236 210" fill="none" stroke="#d9d9d9" stroke-width="2.6" stroke-linecap="round" stroke-linejoin="round" />
<rect x="3264.5" y="192.5" width="36.5" height="37" fill="#545454" rx="7" stroke="#333333" stroke-width="1" />
<line x1="3269.5" y1="230.7" x2="3296" y2="230.7" stroke="#2a2a2a" stroke-width="1.5" opacity="0.8" />
<g stroke="#d0d0d0" stroke-width="2" fill="none">
<path d="M3276.5 203 V198 H3296 V217.5 H3291"/>
<rect x="3269.5" y="203.5" width="20.5" height="20.5"/>
<path d="M3277 209.5 V216.5 H3283.5" stroke-dasharray="3.5 2.5"/>
</g>
<rect x="3314.5" y="192.5" width="190.5" height="37" fill="#282828" rx="7" stroke="#333333" stroke-width="1" />
<line x1="3319.5" y1="230.7" x2="3500" y2="230.7" stroke="#2a2a2a" stroke-width="1.5" opacity="0.8" />
<path d="M3314.5 199.5 a7 7 0 0 1 7 -7 H3351.5 V229.5 H3321.5 a7 7 0 0 1 -7 -7 Z" fill="#545454" />
<rect x="3352.8" y="192.5" width="36.4" height="37" fill="#4772b3" />
<rect x="3390.8" y="192.5" width="36.4" height="37" fill="#545454" />
<rect x="3428.9" y="192.5" width="36.1" height="37" fill="#545454" />
<rect x="3465" y="192.5" width="2" height="37" fill="#282828" />
<line x1="3352" y1="192.5" x2="3352" y2="229.5" stroke="#303030" stroke-width="1.2" />
<line x1="3390" y1="192.5" x2="3390" y2="229.5" stroke="#303030" stroke-width="1.2" />
<line x1="3428" y1="192.5" x2="3428" y2="229.5" stroke="#303030" stroke-width="1.2" />
<line x1="3466" y1="192.5" x2="3466" y2="229.5" stroke="#303030" stroke-width="1.2" />
<circle cx="3333" cy="210.8" r="13" fill="none" stroke="#b4b4b4" stroke-width="2" />
<path d="M3321 207 H3345 M3321.5 216.4 H3344.5 M3331 198 Q3327 211 3331.5 223.7" fill="none" stroke="#b4b4b4" stroke-width="1.8" />
<circle cx="3371" cy="211" r="14" fill="#ffffff" />
<circle cx="3409" cy="211" r="13" fill="none" stroke="#b4b4b4" stroke-width="2" />
<path d="M3409 198 V215.4 Q3401 215 3396.3 211.5 A13 13 0 0 1 3409 198 Z" fill="#c4c4c4" />
<path d="M3409 215.4 V198" fill="none" stroke="#b4b4b4" stroke-width="1.6" />
<path d="M3409.5 216 L3414 221 M3413.5 214.8 L3418 219 M3417 213 L3421 216.5 M3410 222 l1.5 1.5" fill="none" stroke="#c4c4c4" stroke-width="2" />
<circle cx="3447" cy="211" r="13" fill="none" stroke="#b4b4b4" stroke-width="2" />
<path d="M3439 209.3 A9 9 0 0 1 3445.7 203" fill="none" stroke="#b4b4b4" stroke-width="3.4" stroke-linecap="round" />
<path d="M3443 219.5 L3446.5 222.5 M3447.5 217.5 L3451.5 221 M3451.5 215 L3455.5 218.5 M3454.5 211.5 L3458 214.5 M3456.5 207.5 l2 2" fill="none" stroke="#b4b4b4" stroke-width="1.8" />
<path d="M3480 210 L3485 215 L3490 210" fill="none" stroke="#d9d9d9" stroke-width="2.6" stroke-linecap="round" stroke-linejoin="round" />
<rect x="3377.5" y="245" width="127.5" height="36" fill="#282828" rx="7" stroke="#333333" stroke-width="1" />
<line x1="3382.5" y1="282.2" x2="3500" y2="282.2" stroke="#2a2a2a" stroke-width="1.5" opacity="0.8" />
<text x="3392" y="271" font-size="22" fill="#d9d9d9" textLength="79" lengthAdjust="spacing" >Options</text>
<path d="M3488 262.5 L3493 267.5 L3498 262.5" fill="none" stroke="#d9d9d9" stroke-width="2.6" stroke-linecap="round" stroke-linejoin="round" />
<g style="paint-order:stroke" stroke="#1a1a1a" stroke-opacity="0.55" stroke-width="2.5">
<text x="244.5" y="329" font-size="22" fill="#ffffff" textLength="176.5" lengthAdjust="spacing" >User Perspective</text>
<text x="245" y="364.5" font-size="22" fill="#ffffff" textLength="223" lengthAdjust="spacing" >(0) Collection | Empty</text>
</g>
<rect x="130" y="307" width="77" height="135.5" fill="#262626" rx="8" />
<line x1="136" y1="444" x2="201" y2="444" stroke="#303030" stroke-width="2" opacity="0.9" />
<rect x="130" y="457" width="77" height="275.5" fill="#262626" rx="8" />
<line x1="136" y1="734" x2="201" y2="734" stroke="#303030" stroke-width="2" opacity="0.9" />
<rect x="130" y="747.5" width="77" height="135" fill="#262626" rx="8" />
<line x1="136" y1="884" x2="201" y2="884" stroke="#303030" stroke-width="2" opacity="0.9" />
<rect x="130" y="897" width="77" height="65.5" fill="#262626" rx="8" />
<line x1="136" y1="964" x2="201" y2="964" stroke="#303030" stroke-width="2" opacity="0.9" />
<line x1="130" y1="373.7" x2="207" y2="373.7" stroke="#3a3a3a" stroke-width="2.5" />
<line x1="130" y1="524.2" x2="207" y2="524.2" stroke="#3a3a3a" stroke-width="2.5" />
<line x1="130" y1="593.8" x2="207" y2="593.8" stroke="#3a3a3a" stroke-width="2.5" />
<line x1="130" y1="663.7" x2="207" y2="663.7" stroke="#3a3a3a" stroke-width="2.5" />
<line x1="130" y1="813.7" x2="207" y2="813.7" stroke="#3a3a3a" stroke-width="2.5" />
<rect x="130" y="525" width="77" height="68" fill="#4772b3" />
<path d="M205 362.5 V370.5 H197 Z" fill="#8a8a8a" />
<path d="M205 652.5 V660.5 H197 Z" fill="#8a8a8a" />
<path d="M205 802.5 V810.5 H197 Z" fill="#8a8a8a" />
<path d="M205 952.5 V960.5 H197 Z" fill="#8a8a8a" />
<rect x="146.5" y="319" width="43" height="42" fill="none" rx="3" stroke="#e6b45c" stroke-width="3" stroke-dasharray="9.2 5.1" stroke-dashoffset="3"/>
<path d="M161.5 330 L178.5 344.5 L168.5 345.5 L161.5 352.5 Z" fill="#e6e6e6" />
<circle cx="168.3" cy="409" r="22.5" fill="none" stroke="#ffffff" stroke-width="3.4" />
<circle cx="168.3" cy="409" r="22.5" fill="none" stroke="#a8383f" stroke-width="3.4" stroke-dasharray="8.84 8.84" stroke-dashoffset="4.4"/>
<path d="M168.3 395 V404 M168.3 413.5 V423 M154 409 H164 M172.8 409 H182.5" fill="none" stroke="#c4c4c4" stroke-width="2" />
<path d="M168.3 466.5 L175.43 476.275 L161.17000000000002 476.275 Z" fill="#e0e0e0" />
<path d="M168.3 513.5 L161.17000000000002 503.725 L175.43 503.725 Z" fill="#e0e0e0" />
<path d="M144.8 490 L154.57500000000002 482.87 L154.57500000000002 497.13 Z" fill="#e0e0e0" />
<path d="M191.8 490 L182.025 497.13 L182.025 482.87 Z" fill="#e0e0e0" />
<rect x="166.1" y="478" width="4.4" height="6" fill="#e0e0e0" />
<rect x="166.1" y="496" width="4.4" height="6" fill="#e0e0e0" />
<rect x="156.3" y="487.8" width="6" height="4.4" fill="#e0e0e0" />
<rect x="174.3" y="487.8" width="6" height="4.4" fill="#e0e0e0" />
<path d="M150.8 553 A18 18 0 0 1 181.3 546" fill="none" stroke="#ffffff" stroke-width="2.4" />
<path d="M185.8 565 A18 18 0 0 1 155.3 572" fill="none" stroke="#ffffff" stroke-width="2.4" />
<path d="M144.3 556.5 H156.8 L150.60000000000002 566.5 Z" fill="#ffffff" />
<path d="M192.3 561 H179.8 L186.0 551 Z" fill="#ffffff" />
<path d="M168.3 551.5 L175.8 559 L168.3 566.5 L160.8 559 Z" fill="#c6c6c6" />
<path d="M152 625 V613 H185 V645 H172" fill="none" stroke="#a6a6a6" stroke-width="2.8" />
<rect x="150" y="629" width="18" height="17.5" fill="#ececec" />
<path d="M169.5 627.5 L179.5 617.5 M173 617 H180 V624" fill="none" stroke="#ececec" stroke-width="2.4" />
<circle cx="167.8" cy="699.3" r="19.5" fill="none" stroke="#e6e6e6" stroke-width="2" stroke-dasharray="18.6 12" stroke-dashoffset="-6"/>
<rect x="159.8" y="691.3" width="16" height="16" fill="#e6e6e6" />
<path d="M167.8 676.8 L173.69 684.875 L161.91000000000003 684.875 Z" fill="#e6e6e6" />
<path d="M167.8 721.8 L161.91000000000003 713.7249999999999 L173.69 713.7249999999999 Z" fill="#e6e6e6" />
<path d="M145.3 699.3 L153.375 693.41 L153.375 705.1899999999999 Z" fill="#e6e6e6" />
<path d="M190.3 699.3 L182.22500000000002 705.1899999999999 L182.22500000000002 693.41 Z" fill="#e6e6e6" />
<path d="M149.5 782 L171.5 760 a2.5 2.5 0 0 1 3.5 0 L178 763 a2.5 2.5 0 0 1 0 3.5 L156 788.5 Z" fill="#e6e6e6" />
<path d="M148 783.8 L154.3 790 L144.5 793 Z" fill="#e6e6e6" />
<path d="M146.5 794 C153 800.5 160 800 167 792.5 C175 783.5 186 782 193.5 794.5" fill="none" stroke="#8fd9b1" stroke-width="2.6" />
<rect x="150" y="826.5" width="11" height="46.5" fill="#e6e6e6" />
<rect x="150" y="866" width="41" height="7" fill="#e6e6e6" />
<path d="M154 830 h7 M156 833.5 h5 M154 837 h7 M156 840.5 h5 M154 844 h7 M156 847.5 h5 M154 851 h7 M156 854.5 h5 M154 858 h7 M156 861.5 h5" fill="none" stroke="#262626" stroke-width="1.1" />
<path d="M165 866 v4 M168.5 866 v3 M172 866 v4 M175.5 866 v3 M179 866 v4 M182.5 866 v3 M186 866 v4" fill="none" stroke="#262626" stroke-width="1.1" />
<path d="M162 846.5 A19.5 19.5 0 0 1 181 865.5 H162 Z" fill="#8fd9b1" />
<path d="M162 842 A23.5 23.5 0 0 1 185 865.5" fill="none" stroke="#8fd9b1" stroke-width="1.8" />
<path d="M150.4 905 V920.5 M142.7 912.7 H158" fill="none" stroke="#8fd9b1" stroke-width="3.6" />
<path d="M153.5 924.5 H181 V952 H153.5 Z M153.5 924.5 L163.5 914.8 H191 V942 L181 952 M181 924.5 L191 914.8" fill="none" stroke="#8fd9b1" stroke-width="1.8" stroke-linejoin="round" />
<circle cx="2936.7" cy="385" r="14" fill="#a23448" />
<circle cx="3027.5" cy="385" r="14" fill="#6a9b20" />
<line x1="2982" y1="340" x2="2982" y2="390" stroke="#2f7fdc" stroke-width="4.5" />
<line x1="2981.5" y1="388.7" x2="3013" y2="386" stroke="#6a9b20" stroke-width="3" />
<line x1="2981" y1="390" x2="3013" y2="391.3" stroke="#d6455a" stroke-width="4" />
<circle cx="2982" cy="324.8" r="16" fill="#2f7fdc" />
<text x="2982" y="332.5" font-size="21" fill="#0a2a55" text-anchor="middle" font-weight="bold" >Z</text>
<circle cx="3027.2" cy="391.8" r="16.5" fill="#f0385b" />
<text x="3027.2" y="399.5" font-size="21" fill="#4a0a16" text-anchor="middle" font-weight="bold" >X</text>
<circle cx="2936.7" cy="391.8" r="15.3" fill="#56742a" stroke="#86d411" stroke-width="2.6" />
<circle cx="2982" cy="452.8" r="14.8" fill="#3c5a80" stroke="#2f7fdc" stroke-width="2.6" />
<circle cx="3037" cy="498.6" r="27.6" fill="#2f2f2f" />
<circle cx="3037" cy="558.7" r="27.6" fill="#2f2f2f" />
<circle cx="3037" cy="618.6" r="27.6" fill="#2f2f2f" />
<circle cx="3037" cy="678.4" r="27.6" fill="#2f2f2f" />
<circle cx="3040.5" cy="495.5" r="12.2" fill="#dcdcdc" />
<line x1="3031" y1="505" x2="3023" y2="513" stroke="#dcdcdc" stroke-width="4.2" stroke-linecap="round" />
<path d="M3034.5 495.5 H3046.5 M3040.5 489.5 V501.5" fill="none" stroke="#2f2f2f" stroke-width="2" />
<path d="M3024 560.5 C3021 557.5 3024.5 555 3027.5 557.5 L3031 561 L3029.5 549 C3029 546 3033 545.5 3033.5 548.5 L3035 557 L3035.5 545.5 C3035.5 542.5 3039.5 542.5 3039.5 545.5 L3040 557 L3042.5 547 C3043 544 3047 545 3046.5 548 L3044.8 559 L3048.5 552.5 C3050 550 3053.5 551.5 3052 554.5 L3047.5 566 C3045.5 571.5 3042 574 3037.5 574 C3032.5 574 3029.5 571.5 3027 566 Z" fill="#dcdcdc" />
<circle cx="3028.5" cy="612.5" r="7.5" fill="#dcdcdc" />
<circle cx="3042" cy="611" r="9" fill="#dcdcdc" />
<circle cx="3028.5" cy="612.5" r="2" fill="#2f2f2f" />
<circle cx="3042" cy="611" r="2.2" fill="#2f2f2f" />
<rect x="3027.5" y="621.5" width="17" height="12" fill="#dcdcdc" rx="2" />
<path d="M3046 627.5 L3053.5 622.5 V632.5 Z" fill="#dcdcdc" />
<rect x="3024.5" y="624.5" width="3" height="5" fill="#dcdcdc" />
<path d="M3029 666.5 H3045 L3052 691.5 H3022 Z M3025.5 678.5 H3048.5 M3034.3 666.5 L3031.5 691.5 M3039.7 666.5 L3042.5 691.5" fill="none" stroke="#dcdcdc" stroke-width="2.2" stroke-linejoin="round" />
<g clip-path="url(#v3d)">
<path d="M3097.5 293 H3467.5 V898 a8 8 0 0 1 -8 8 H3105.5 a8 8 0 0 1 -8 -8 Z" fill="#3b3b3b" />
<path d="M3114.7 314 L3122.7 322 L3130.7 314" fill="none" stroke="#c8c8c8" stroke-width="2" stroke-linecap="round" stroke-linejoin="round" />
<text x="3143.5" y="327" font-size="22" fill="#e6e6e6" textLength="104.5" lengthAdjust="spacing" >Transform</text>
<rect x="3433.5" y="313.5" width="2.4" height="2.4" fill="#202020" />
<rect x="3439.1" y="313.5" width="2.4" height="2.4" fill="#202020" />
<rect x="3444.7" y="313.5" width="2.4" height="2.4" fill="#202020" />
<rect x="3450.3" y="313.5" width="2.4" height="2.4" fill="#202020" />
<rect x="3433.5" y="319.1" width="2.4" height="2.4" fill="#202020" />
<rect x="3439.1" y="319.1" width="2.4" height="2.4" fill="#202020" />
<rect x="3444.7" y="319.1" width="2.4" height="2.4" fill="#202020" />
<rect x="3450.3" y="319.1" width="2.4" height="2.4" fill="#202020" />
<text x="3117" y="387" font-size="22" fill="#c8c8c8" textLength="92.5" lengthAdjust="spacing" >Location:</text>
<rect x="3116" y="401.5" width="252" height="113.4" fill="#545454" rx="7" />
<line x1="3122" y1="516.2" x2="3362" y2="516.2" stroke="#2e2e2e" stroke-width="1.8" opacity="0.8" />
<line x1="3116" y1="439.2" x2="3368" y2="439.2" stroke="#3d3d3d" stroke-width="2" />
<line x1="3116" y1="477.9" x2="3368" y2="477.9" stroke="#3d3d3d" stroke-width="2" />
<text x="3147.6" y="426.5" font-size="22" fill="#e6e6e6" >X</text>
<text x="3342.5" y="426.5" font-size="22" fill="#e6e6e6" text-anchor="end" textLength="38" lengthAdjust="spacing" >0 m</text>
<path d="M3405.5 418.5 V414.5 a6.3 6.3 0 0 1 12.6 0 V417" fill="none" stroke="#a6a6a6" stroke-width="2" stroke-linecap="round" />
<rect x="3415" y="417.5" width="17" height="10.5" fill="none" rx="1" stroke="#a6a6a6" stroke-width="2" />
<rect x="3422.2" y="420.7" width="2.6" height="4.2" fill="#a6a6a6" />
<text x="3147.6" y="465.5" font-size="22" fill="#e6e6e6" >Y</text>
<text x="3342.5" y="465.5" font-size="22" fill="#e6e6e6" text-anchor="end" textLength="38" lengthAdjust="spacing" >0 m</text>
<path d="M3405.5 457.5 V453.5 a6.3 6.3 0 0 1 12.6 0 V456" fill="none" stroke="#a6a6a6" stroke-width="2" stroke-linecap="round" />
<rect x="3415" y="456.5" width="17" height="10.5" fill="none" rx="1" stroke="#a6a6a6" stroke-width="2" />
<rect x="3422.2" y="459.7" width="2.6" height="4.2" fill="#a6a6a6" />
<text x="3147.6" y="505.5" font-size="22" fill="#e6e6e6" >Z</text>
<text x="3342.5" y="505.5" font-size="22" fill="#e6e6e6" text-anchor="end" textLength="38" lengthAdjust="spacing" >0 m</text>
<path d="M3405.5 497.5 V493.5 a6.3 6.3 0 0 1 12.6 0 V496" fill="none" stroke="#a6a6a6" stroke-width="2" stroke-linecap="round" />
<rect x="3415" y="496.5" width="17" height="10.5" fill="none" rx="1" stroke="#a6a6a6" stroke-width="2" />
<rect x="3422.2" y="499.7" width="2.6" height="4.2" fill="#a6a6a6" />
<text x="3117" y="551.5" font-size="22" fill="#c8c8c8" textLength="91" lengthAdjust="spacing" >Rotation:</text>
<rect x="3116" y="565" width="252" height="116.4" fill="#545454" rx="7" />
<line x1="3122" y1="682.7" x2="3362" y2="682.7" stroke="#2e2e2e" stroke-width="1.8" opacity="0.8" />
<line x1="3116" y1="603.2" x2="3368" y2="603.2" stroke="#3d3d3d" stroke-width="2" />
<line x1="3116" y1="642.4" x2="3368" y2="642.4" stroke="#3d3d3d" stroke-width="2" />
<text x="3147.6" y="590.3" font-size="22" fill="#e6e6e6" >X</text>
<text x="3342.5" y="590.3" font-size="22" fill="#e6e6e6" text-anchor="end" textLength="23" lengthAdjust="spacing" >0°</text>
<path d="M3405.5 582.0 V578.0 a6.3 6.3 0 0 1 12.6 0 V580.5" fill="none" stroke="#a6a6a6" stroke-width="2" stroke-linecap="round" />
<rect x="3415" y="581" width="17" height="10.5" fill="none" rx="1" stroke="#a6a6a6" stroke-width="2" />
<rect x="3422.2" y="584.2" width="2.6" height="4.2" fill="#a6a6a6" />
<text x="3147.6" y="629.3" font-size="22" fill="#e6e6e6" >Y</text>
<text x="3342.5" y="629.3" font-size="22" fill="#e6e6e6" text-anchor="end" textLength="23" lengthAdjust="spacing" >0°</text>
<path d="M3405.5 621.0 V617.0 a6.3 6.3 0 0 1 12.6 0 V619.5" fill="none" stroke="#a6a6a6" stroke-width="2" stroke-linecap="round" />
<rect x="3415" y="620" width="17" height="10.5" fill="none" rx="1" stroke="#a6a6a6" stroke-width="2" />
<rect x="3422.2" y="623.2" width="2.6" height="4.2" fill="#a6a6a6" />
<text x="3147.6" y="669.3" font-size="22" fill="#e6e6e6" >Z</text>
<text x="3342.5" y="669.3" font-size="22" fill="#e6e6e6" text-anchor="end" textLength="96" lengthAdjust="spacing" >-99.495°</text>
<path d="M3405.5 661.0 V657.0 a6.3 6.3 0 0 1 12.6 0 V659.5" fill="none" stroke="#a6a6a6" stroke-width="2" stroke-linecap="round" />
<rect x="3415" y="660" width="17" height="10.5" fill="none" rx="1" stroke="#a6a6a6" stroke-width="2" />
<rect x="3422.2" y="663.2" width="2.6" height="4.2" fill="#a6a6a6" />
<rect x="3116" y="689" width="333" height="36" fill="#282828" rx="7" stroke="#333" stroke-width="1" />
<line x1="3122" y1="726.3" x2="3443" y2="726.3" stroke="#2e2e2e" stroke-width="1.8" opacity="0.8" />
<text x="3130" y="715" font-size="22" fill="#d9d9d9" textLength="102" lengthAdjust="spacing" >XYZ Euler</text>
<path d="M3432 706 L3437 711 L3442 706" fill="none" stroke="#d9d9d9" stroke-width="2.6" stroke-linecap="round" stroke-linejoin="round" />
<text x="3117" y="759" font-size="22" fill="#c8c8c8" textLength="62" lengthAdjust="spacing" >Scale:</text>
<rect x="3116" y="773" width="252" height="117" fill="#545454" rx="7" />
<line x1="3122" y1="891.3" x2="3362" y2="891.3" stroke="#2e2e2e" stroke-width="1.8" opacity="0.8" />
<line x1="3116" y1="811.5" x2="3368" y2="811.5" stroke="#3d3d3d" stroke-width="2" />
<line x1="3116" y1="851" x2="3368" y2="851" stroke="#3d3d3d" stroke-width="2" />
<text x="3147.6" y="798.3" font-size="22" fill="#e6e6e6" >X</text>
<text x="3342.5" y="798.3" font-size="22" fill="#e6e6e6" text-anchor="end" textLength="60" lengthAdjust="spacing" >0.091</text>
<path d="M3405.5 790.0 V786.0 a6.3 6.3 0 0 1 12.6 0 V788.5" fill="none" stroke="#a6a6a6" stroke-width="2" stroke-linecap="round" />
<rect x="3415" y="789" width="17" height="10.5" fill="none" rx="1" stroke="#a6a6a6" stroke-width="2" />
<rect x="3422.2" y="792.2" width="2.6" height="4.2" fill="#a6a6a6" />
<text x="3147.6" y="837.3" font-size="22" fill="#e6e6e6" >Y</text>
<text x="3342.5" y="837.3" font-size="22" fill="#e6e6e6" text-anchor="end" textLength="60" lengthAdjust="spacing" >0.091</text>
<path d="M3405.5 829.0 V825.0 a6.3 6.3 0 0 1 12.6 0 V827.5" fill="none" stroke="#a6a6a6" stroke-width="2" stroke-linecap="round" />
<rect x="3415" y="828" width="17" height="10.5" fill="none" rx="1" stroke="#a6a6a6" stroke-width="2" />
<rect x="3422.2" y="831.2" width="2.6" height="4.2" fill="#a6a6a6" />
<text x="3147.6" y="877.3" font-size="22" fill="#e6e6e6" >Z</text>
<text x="3342.5" y="877.3" font-size="22" fill="#e6e6e6" text-anchor="end" textLength="60" lengthAdjust="spacing" >0.091</text>
<path d="M3405.5 869.0 V865.0 a6.3 6.3 0 0 1 12.6 0 V867.5" fill="none" stroke="#a6a6a6" stroke-width="2" stroke-linecap="round" />
<rect x="3415" y="868" width="17" height="10.5" fill="none" rx="1" stroke="#a6a6a6" stroke-width="2" />
<rect x="3422.2" y="871.2" width="2.6" height="4.2" fill="#a6a6a6" />
<path d="M3482 298.2 H3510.5 a8 8 0 0 1 8 8 V371.3 a8 8 0 0 1 -8 8 H3482 Z" fill="#262626" stroke="#3a3a3a" stroke-width="1.6" />
<text transform="translate(3492.5 338.75) rotate(90)" text-anchor="middle" font-size="22" fill="#ffffff" textLength="47" lengthAdjust="spacing">Item</text>
<path d="M3482 388.4 H3510.5 a8 8 0 0 1 8 8 V457 a8 8 0 0 1 -8 8 H3482 Z" fill="#1f1f1f" stroke="#3a3a3a" stroke-width="1.6" />
<text transform="translate(3492.5 426.7) rotate(90)" text-anchor="middle" font-size="22" fill="#c8c8c8" textLength="45" lengthAdjust="spacing">Tool</text>
<path d="M3482 474.2 H3510.5 a8 8 0 0 1 8 8 V548.6 a8 8 0 0 1 -8 8 H3482 Z" fill="#1f1f1f" stroke="#3a3a3a" stroke-width="1.6" />
<text transform="translate(3492.5 515.4) rotate(90)" text-anchor="middle" font-size="22" fill="#c8c8c8" textLength="49" lengthAdjust="spacing">View</text>
<path d="M3482 566 H3510.5 a8 8 0 0 1 8 8 V628 a8 8 0 0 1 -8 8 H3482 Z" fill="#1f1f1f" stroke="#3a3a3a" stroke-width="1.6" />
<text transform="translate(3492.5 601) rotate(90)" text-anchor="middle" font-size="22" fill="#c8c8c8" textLength="40" lengthAdjust="spacing">Edit</text>
</g>
<g clip-path="url(#tl)">
<rect x="114" y="2136" width="3407" height="486" fill="#303030" />
<rect x="114" y="2136" width="129.7" height="486" fill="#222222" />
<line x1="172.26" y1="2136" x2="172.26" y2="2622" stroke="#1d1d1d" stroke-width="1.6" />
<line x1="232.2" y1="2136" x2="232.2" y2="2622" stroke="#1b1b1b" stroke-width="2" />
<line x1="292.14" y1="2136" x2="292.14" y2="2622" stroke="#262626" stroke-width="1.6" />
<line x1="352.08" y1="2136" x2="352.08" y2="2622" stroke="#1b1b1b" stroke-width="2" />
<line x1="412.02" y1="2136" x2="412.02" y2="2622" stroke="#262626" stroke-width="1.6" />
<line x1="471.96" y1="2136" x2="471.96" y2="2622" stroke="#1b1b1b" stroke-width="2" />
<line x1="531.9" y1="2136" x2="531.9" y2="2622" stroke="#262626" stroke-width="1.6" />
<line x1="591.84" y1="2136" x2="591.84" y2="2622" stroke="#1b1b1b" stroke-width="2" />
<line x1="651.78" y1="2136" x2="651.78" y2="2622" stroke="#262626" stroke-width="1.6" />
<line x1="711.72" y1="2136" x2="711.72" y2="2622" stroke="#1b1b1b" stroke-width="2" />
<line x1="771.66" y1="2136" x2="771.66" y2="2622" stroke="#262626" stroke-width="1.6" />
<line x1="831.6" y1="2136" x2="831.6" y2="2622" stroke="#1b1b1b" stroke-width="2" />
<line x1="891.54" y1="2136" x2="891.54" y2="2622" stroke="#262626" stroke-width="1.6" />
<line x1="951.48" y1="2136" x2="951.48" y2="2622" stroke="#1b1b1b" stroke-width="2" />
<line x1="1011.42" y1="2136" x2="1011.42" y2="2622" stroke="#262626" stroke-width="1.6" />
<line x1="1071.36" y1="2136" x2="1071.36" y2="2622" stroke="#1b1b1b" stroke-width="2" />
<line x1="1131.3" y1="2136" x2="1131.3" y2="2622" stroke="#262626" stroke-width="1.6" />
<line x1="1191.24" y1="2136" x2="1191.24" y2="2622" stroke="#1b1b1b" stroke-width="2" />
<line x1="1251.18" y1="2136" x2="1251.18" y2="2622" stroke="#262626" stroke-width="1.6" />
<line x1="1311.12" y1="2136" x2="1311.12" y2="2622" stroke="#1b1b1b" stroke-width="2" />
<line x1="1371.06" y1="2136" x2="1371.06" y2="2622" stroke="#262626" stroke-width="1.6" />
<line x1="1431" y1="2136" x2="1431" y2="2622" stroke="#1b1b1b" stroke-width="2" />
<line x1="1490.94" y1="2136" x2="1490.94" y2="2622" stroke="#262626" stroke-width="1.6" />
<line x1="1550.88" y1="2136" x2="1550.88" y2="2622" stroke="#1b1b1b" stroke-width="2" />
<line x1="1610.82" y1="2136" x2="1610.82" y2="2622" stroke="#262626" stroke-width="1.6" />
<line x1="1670.76" y1="2136" x2="1670.76" y2="2622" stroke="#1b1b1b" stroke-width="2" />
<line x1="1730.7" y1="2136" x2="1730.7" y2="2622" stroke="#262626" stroke-width="1.6" />
<line x1="1790.64" y1="2136" x2="1790.64" y2="2622" stroke="#1b1b1b" stroke-width="2" />
<line x1="1850.58" y1="2136" x2="1850.58" y2="2622" stroke="#262626" stroke-width="1.6" />
<line x1="1910.52" y1="2136" x2="1910.52" y2="2622" stroke="#1b1b1b" stroke-width="2" />
<line x1="1970.46" y1="2136" x2="1970.46" y2="2622" stroke="#262626" stroke-width="1.6" />
<line x1="2030.4" y1="2136" x2="2030.4" y2="2622" stroke="#1b1b1b" stroke-width="2" />
<line x1="2090.34" y1="2136" x2="2090.34" y2="2622" stroke="#262626" stroke-width="1.6" />
<line x1="2150.28" y1="2136" x2="2150.28" y2="2622" stroke="#1b1b1b" stroke-width="2" />
<line x1="2210.22" y1="2136" x2="2210.22" y2="2622" stroke="#262626" stroke-width="1.6" />
<line x1="2270.16" y1="2136" x2="2270.16" y2="2622" stroke="#1b1b1b" stroke-width="2" />
<line x1="2330.1" y1="2136" x2="2330.1" y2="2622" stroke="#262626" stroke-width="1.6" />
<line x1="2390.04" y1="2136" x2="2390.04" y2="2622" stroke="#1b1b1b" stroke-width="2" />
<line x1="2449.98" y1="2136" x2="2449.98" y2="2622" stroke="#262626" stroke-width="1.6" />
<line x1="2509.92" y1="2136" x2="2509.92" y2="2622" stroke="#1b1b1b" stroke-width="2" />
<line x1="2569.86" y1="2136" x2="2569.86" y2="2622" stroke="#262626" stroke-width="1.6" />
<line x1="2629.8" y1="2136" x2="2629.8" y2="2622" stroke="#1b1b1b" stroke-width="2" />
<line x1="2689.74" y1="2136" x2="2689.74" y2="2622" stroke="#262626" stroke-width="1.6" />
<line x1="2749.68" y1="2136" x2="2749.68" y2="2622" stroke="#1b1b1b" stroke-width="2" />
<line x1="2809.62" y1="2136" x2="2809.62" y2="2622" stroke="#262626" stroke-width="1.6" />
<line x1="2869.56" y1="2136" x2="2869.56" y2="2622" stroke="#1b1b1b" stroke-width="2" />
<line x1="2929.5" y1="2136" x2="2929.5" y2="2622" stroke="#262626" stroke-width="1.6" />
<line x1="2989.44" y1="2136" x2="2989.44" y2="2622" stroke="#1b1b1b" stroke-width="2" />
<line x1="3049.38" y1="2136" x2="3049.38" y2="2622" stroke="#262626" stroke-width="1.6" />
<line x1="3109.32" y1="2136" x2="3109.32" y2="2622" stroke="#1b1b1b" stroke-width="2" />
<line x1="3169.26" y1="2136" x2="3169.26" y2="2622" stroke="#262626" stroke-width="1.6" />
<line x1="3229.2" y1="2136" x2="3229.2" y2="2622" stroke="#1b1b1b" stroke-width="2" />
<line x1="3289.14" y1="2136" x2="3289.14" y2="2622" stroke="#262626" stroke-width="1.6" />
<line x1="3349.08" y1="2136" x2="3349.08" y2="2622" stroke="#1b1b1b" stroke-width="2" />
<line x1="3409.02" y1="2136" x2="3409.02" y2="2622" stroke="#262626" stroke-width="1.6" />
<line x1="3468.96" y1="2136" x2="3468.96" y2="2622" stroke="#1b1b1b" stroke-width="2" />
<line x1="243.9" y1="2136" x2="243.9" y2="2622" stroke="#0a0a0a" stroke-width="2.4" />
<rect x="114" y="2041" width="3407" height="50" fill="#303030" />
<rect x="114" y="2090.75" width="3407" height="45.5" fill="#1c1c1c" />
<text x="352.08" y="2122" font-size="22" fill="#b4b4b4" text-anchor="middle" textLength="25.5" lengthAdjust="spacing" >10</text>
<text x="471.96" y="2122" font-size="22" fill="#b4b4b4" text-anchor="middle" textLength="25.5" lengthAdjust="spacing" >20</text>
<text x="591.84" y="2122" font-size="22" fill="#b4b4b4" text-anchor="middle" textLength="25.5" lengthAdjust="spacing" >30</text>
<text x="711.72" y="2122" font-size="22" fill="#b4b4b4" text-anchor="middle" textLength="25.5" lengthAdjust="spacing" >40</text>
<text x="831.6" y="2122" font-size="22" fill="#b4b4b4" text-anchor="middle" textLength="25.5" lengthAdjust="spacing" >50</text>
<text x="951.48" y="2122" font-size="22" fill="#b4b4b4" text-anchor="middle" textLength="25.5" lengthAdjust="spacing" >60</text>
<text x="1071.36" y="2122" font-size="22" fill="#b4b4b4" text-anchor="middle" textLength="25.5" lengthAdjust="spacing" >70</text>
<text x="1191.24" y="2122" font-size="22" fill="#b4b4b4" text-anchor="middle" textLength="25.5" lengthAdjust="spacing" >80</text>
<text x="1311.12" y="2122" font-size="22" fill="#b4b4b4" text-anchor="middle" textLength="25.5" lengthAdjust="spacing" >90</text>
<text x="1431" y="2122" font-size="22" fill="#b4b4b4" text-anchor="middle" textLength="40" lengthAdjust="spacing" >100</text>
<text x="1550.88" y="2122" font-size="22" fill="#b4b4b4" text-anchor="middle" textLength="40" lengthAdjust="spacing" >110</text>
<text x="1670.76" y="2122" font-size="22" fill="#b4b4b4" text-anchor="middle" textLength="40" lengthAdjust="spacing" >120</text>
<text x="1790.64" y="2122" font-size="22" fill="#b4b4b4" text-anchor="middle" textLength="40" lengthAdjust="spacing" >130</text>
<text x="1910.52" y="2122" font-size="22" fill="#b4b4b4" text-anchor="middle" textLength="40" lengthAdjust="spacing" >140</text>
<text x="2030.4" y="2122" font-size="22" fill="#b4b4b4" text-anchor="middle" textLength="40" lengthAdjust="spacing" >150</text>
<text x="2150.28" y="2122" font-size="22" fill="#b4b4b4" text-anchor="middle" textLength="40" lengthAdjust="spacing" >160</text>
<text x="2270.16" y="2122" font-size="22" fill="#b4b4b4" text-anchor="middle" textLength="40" lengthAdjust="spacing" >170</text>
<text x="2390.04" y="2122" font-size="22" fill="#b4b4b4" text-anchor="middle" textLength="40" lengthAdjust="spacing" >180</text>
<text x="2509.92" y="2122" font-size="22" fill="#b4b4b4" text-anchor="middle" textLength="40" lengthAdjust="spacing" >190</text>
<text x="2629.8" y="2122" font-size="22" fill="#b4b4b4" text-anchor="middle" textLength="40" lengthAdjust="spacing" >200</text>
<text x="2749.68" y="2122" font-size="22" fill="#b4b4b4" text-anchor="middle" textLength="40" lengthAdjust="spacing" >210</text>
<text x="2869.56" y="2122" font-size="22" fill="#b4b4b4" text-anchor="middle" textLength="40" lengthAdjust="spacing" >220</text>
<text x="2989.44" y="2122" font-size="22" fill="#b4b4b4" text-anchor="middle" textLength="40" lengthAdjust="spacing" >230</text>
<text x="3109.32" y="2122" font-size="22" fill="#b4b4b4" text-anchor="middle" textLength="40" lengthAdjust="spacing" >240</text>
<text x="3229.2" y="2122" font-size="22" fill="#b4b4b4" text-anchor="middle" textLength="40" lengthAdjust="spacing" >250</text>
<text x="3349.08" y="2122" font-size="22" fill="#b4b4b4" text-anchor="middle" textLength="40" lengthAdjust="spacing" >260</text>
<text x="3468.96" y="2122" font-size="22" fill="#b4b4b4" text-anchor="middle" textLength="40" lengthAdjust="spacing" >270</text>
<line x1="232" y1="2128" x2="232" y2="2622" stroke="#4772b3" stroke-width="4" />
<rect x="208.25" y="2097" width="47.5" height="33.75" fill="#4772b3" rx="7" />
<text x="231.8" y="2122" font-size="22" fill="#ffffff" text-anchor="middle" >0</text>
<rect x="3511.8" y="2109.5" width="6.2" height="471" fill="#3c3c3c" rx="3" />
<rect x="130" y="2600.5" width="1540" height="16.5" fill="#505050" rx="8.2" />
<circle cx="138" cy="2608.7" r="5.5" fill="#262626" />
<circle cx="1662" cy="2608.7" r="5.5" fill="#262626" />
<rect x="110" y="2120" width="18" height="27.5" fill="#262626" rx="5" />
<path d="M118.5 2127.5 L124.5 2133.5 L118.5 2139.5" fill="none" stroke="#707070" stroke-width="2.2" stroke-linecap="round" stroke-linejoin="round" />
<rect x="3506" y="2120" width="20" height="27.5" fill="#242424" rx="5" />
<path d="M3519 2126.5 L3511 2133.5 L3519 2140.5" fill="none" stroke="#707070" stroke-width="2.6" />
</g>
<rect x="129" y="2047" width="61.75" height="38" fill="#2b2b2b" rx="7" stroke="#404040" stroke-width="1.6" />
<circle cx="152" cy="2065.8" r="14" fill="#e8e8e8" />
<path d="M155 2057.5 L149 2065.8 L154.5 2073" fill="none" stroke="#2b2b2b" stroke-width="3.6" stroke-linecap="round" stroke-linejoin="round" />
<path d="M173 2065.5 L178 2070.5 L183 2065.5" fill="none" stroke="#d9d9d9" stroke-width="2.6" stroke-linecap="round" stroke-linejoin="round" />
<rect x="202.75" y="2047" width="261.75" height="38" fill="#2b2b2b" rx="7" stroke="#404040" stroke-width="1.6" />
<line x1="345" y1="2047" x2="345" y2="2085" stroke="#404040" stroke-width="1.6" />
<text x="219" y="2074.3" font-size="22" fill="#d9d9d9" textLength="92.3" lengthAdjust="spacing" >Playback</text>
<path d="M327 2065.5 L332 2070.5 L337 2065.5" fill="none" stroke="#d9d9d9" stroke-width="2.6" stroke-linecap="round" stroke-linejoin="round" />
<text x="360.75" y="2074.3" font-size="22" fill="#d9d9d9" textLength="68.8" lengthAdjust="spacing" >Keying</text>
<path d="M447 2065.5 L452 2070.5 L457 2065.5" fill="none" stroke="#d9d9d9" stroke-width="2.6" stroke-linecap="round" stroke-linejoin="round" />
<text x="485.75" y="2074.3" font-size="22" fill="#d9d9d9" textLength="48.7" lengthAdjust="spacing" >View</text>
<text x="566.5" y="2074.3" font-size="22" fill="#d9d9d9" textLength="71.7" lengthAdjust="spacing" >Marker</text>
<rect x="1631.5" y="2047" width="77.5" height="38" fill="#2a2a2a" rx="7" stroke="#3a3a3a" stroke-width="1.6" />
<path d="M1631.5 2054 a7 7 0 0 1 7 -7 H1668.7 V2085 H1638.5 a7 7 0 0 1 -7 -7 Z" fill="#525252" />
<circle cx="1650" cy="2066" r="8.2" fill="#e6e6e6" />
<path d="M1682.5 2064.75 L1688 2070.25 L1693.5 2064.75" fill="none" stroke="#4c4c4c" stroke-width="2.4" stroke-linecap="round" stroke-linejoin="round" />
<rect x="1722" y="2047" width="236" height="38" fill="#545454" rx="7" />
<line x1="1758.9" y1="2047" x2="1758.9" y2="2085" stroke="#3a3a3a" stroke-width="1.6" />
<line x1="1799" y1="2047" x2="1799" y2="2085" stroke="#3a3a3a" stroke-width="1.6" />
<line x1="1838.8" y1="2047" x2="1838.8" y2="2085" stroke="#3a3a3a" stroke-width="1.6" />
<line x1="1879" y1="2047" x2="1879" y2="2085" stroke="#3a3a3a" stroke-width="1.6" />
<line x1="1919" y1="2047" x2="1919" y2="2085" stroke="#3a3a3a" stroke-width="1.6" />
<rect x="1729.9" y="2056" width="4.2" height="20" fill="#e6e6e6" />
<path d="M1736 2066 L1747.8 2058.2 V2073.8 Z" fill="#e6e6e6" stroke="#e6e6e6" stroke-width="1" stroke-linejoin="round" />
<path d="M1772 2056 L1781 2066 L1772 2076 L1763 2066 Z" fill="#e6e6e6" />
<path d="M1783 2066 L1793 2058.5 V2073.5 Z" fill="#e6e6e6" stroke="#e6e6e6" stroke-width="1" stroke-linejoin="round" />
<path d="M1809.5 2066 L1828 2055 V2077 Z" fill="#e6e6e6" stroke="#e6e6e6" stroke-width="2.4" stroke-linejoin="round" />
<path d="M1868.2 2066 L1849.7 2055 V2077 Z" fill="#e6e6e6" stroke="#e6e6e6" stroke-width="2.4" stroke-linejoin="round" />
<path d="M1895 2066 L1885 2058.5 V2073.5 Z" fill="#e6e6e6" stroke="#e6e6e6" stroke-width="1" stroke-linejoin="round" />
<path d="M1905.9 2056 L1914.9 2066 L1905.9 2076 L1896.9 2066 Z" fill="#e6e6e6" />
<path d="M1942.8 2066 L1931 2058.2 V2073.8 Z" fill="#e6e6e6" stroke="#e6e6e6" stroke-width="1" stroke-linejoin="round" />
<rect x="1944.9" y="2056" width="4.2" height="20" fill="#e6e6e6" />
<rect x="2958.5" y="2047.5" width="146.5" height="37" fill="#545454" rx="7" />
<text x="3031.5" y="2074.3" font-size="22" fill="#e6e6e6" text-anchor="middle" >0</text>
<rect x="3119" y="2047.5" width="386.5" height="37" fill="#545454" rx="7" stroke="#3a3a3a" stroke-width="1.6" />
<line x1="3156.5" y1="2047.5" x2="3156.5" y2="2084.5" stroke="#3a3a3a" stroke-width="1.6" />
<line x1="3335.3" y1="2047.5" x2="3335.3" y2="2084.5" stroke="#3a3a3a" stroke-width="1.6" />
<circle cx="3137" cy="2067.5" r="10.5" fill="none" stroke="#d0d0d0" stroke-width="2" />
<path d="M3137 2061 V2068 H3142.5 M3132.5 2053.5 H3141.5 M3137 2053.5 V2057 M3146 2058.5 L3149 2055.5" fill="none" stroke="#d0d0d0" stroke-width="2" />
<text x="3189" y="2074.3" font-size="22" fill="#e6e6e6" textLength="48" lengthAdjust="spacing" >Start</text>
<text x="3302" y="2074.3" font-size="22" fill="#e6e6e6" text-anchor="middle" >1</text>
<text x="3368" y="2074.3" font-size="22" fill="#e6e6e6" textLength="37.5" lengthAdjust="spacing" >End</text>
<text x="3439.5" y="2074.3" font-size="22" fill="#e6e6e6" textLength="39.5" lengthAdjust="spacing" >600</text>
<g clip-path="url(#ol)">
<rect x="3528" y="240" width="714" height="724" fill="#282828" />
<rect x="3528" y="238" width="714" height="40" fill="#2b2b2b" />
<rect x="3528" y="318" width="714" height="40" fill="#2b2b2b" />
<rect x="3528" y="398" width="714" height="40" fill="#2b2b2b" />
<rect x="3528" y="478" width="714" height="40" fill="#2b2b2b" />
<rect x="3528" y="558" width="714" height="40" fill="#2b2b2b" />
<rect x="3528" y="638" width="714" height="40" fill="#2b2b2b" />
<rect x="3528" y="718" width="714" height="40" fill="#2b2b2b" />
<rect x="3528" y="798" width="714" height="40" fill="#2b2b2b" />
<rect x="3528" y="878" width="714" height="40" fill="#2b2b2b" />
<rect x="3528" y="958" width="714" height="40" fill="#2b2b2b" />
<rect x="3528" y="318" width="714" height="40" fill="#334d80" />
<rect x="3528" y="187" width="714" height="52" fill="#2c2c2c" />
</g>
<rect x="3543" y="191.8" width="63" height="38.5" fill="#282828" rx="7" stroke="#3e3e3e" stroke-width="1.6" />
<path d="M3555 204 V224 H3562 M3555 214 H3562" fill="none" stroke="#8c8c8c" stroke-width="2" />
<rect x="3551.5" y="197" width="10" height="5.5" fill="#d9d9d9" />
<rect x="3565" y="210" width="13.5" height="6" fill="#d9d9d9" />
<rect x="3565" y="220.5" width="13.5" height="6" fill="#d9d9d9" />
<path d="M3588.5 210.5 L3593.5 215.5 L3598.5 210.5" fill="none" stroke="#d9d9d9" stroke-width="2.6" stroke-linecap="round" stroke-linejoin="round" />
<rect x="3617" y="191.8" width="63.5" height="38.5" fill="#282828" rx="7" stroke="#3e3e3e" stroke-width="1.6" />
<path d="M3630 205 V221 H3647 M3627 208 V224 H3644" fill="none" stroke="#a8a8a8" stroke-width="1.8" />
<rect x="3634" y="199" width="20" height="19" fill="none" stroke="#d9d9d9" stroke-width="2" />
<path d="M3635 217 L3642 206 L3646 212 L3648.5 209 L3653 217 Z" fill="#d9d9d9" />
<circle cx="3649.5" cy="203.5" r="1.6" fill="#d9d9d9" />
<path d="M3662.5 210.5 L3667.5 215.5 L3672.5 210.5" fill="none" stroke="#d9d9d9" stroke-width="2.6" stroke-linecap="round" stroke-linejoin="round" />
<rect x="3749" y="191.8" width="228.5" height="38.5" fill="#1d1d1d" rx="7" stroke="#3e3e3e" stroke-width="1.6" />
<circle cx="3772" cy="208" r="8.5" fill="none" stroke="#d9d9d9" stroke-width="2.2" />
<line x1="3766" y1="214.5" x2="3758.5" y2="223" stroke="#d9d9d9" stroke-width="2.4" stroke-linecap="round" />
<rect x="4114.6" y="191.8" width="62.4" height="38.5" fill="#282828" rx="7" stroke="#3e3e3e" stroke-width="1.6" />
<path d="M4121 198 H4146.5 L4137 210.5 V219 L4131 224 V210.5 Z" fill="none" stroke="#e6e6e6" stroke-width="2" stroke-linejoin="miter" />
<path d="M4159 210.25 L4164.5 215.75 L4170 210.25" fill="none" stroke="#d9d9d9" stroke-width="2.6" stroke-linecap="round" stroke-linejoin="round" />
<rect x="4188.7" y="191.8" width="38.2" height="38.5" fill="#4a4a4a" rx="7" stroke="#4a4a4a" stroke-width="1.6" />
<path d="M4195 202.5 H4206 V207.5 H4195 Z M4197 210 V223.5 H4215 V212" fill="none" stroke="#9c9c9c" stroke-width="2" />
<rect x="4202" y="213" width="7" height="3.2" fill="#9c9c9c" rx="1.5" />
<circle cx="4215" cy="204" r="7.2" fill="#e6e6e6" />
<path d="M4210.5 204 H4219.5 M4215 199.5 V208.5" fill="none" stroke="#4a4a4a" stroke-width="1.8" />
<g clip-path="url(#ol)">
<line x1="3585.5" y1="328" x2="3585.5" y2="428" stroke="#6a6a6a" stroke-width="1.4" />
<line x1="3625.4" y1="372" x2="3625.4" y2="428" stroke="#6a6a6a" stroke-width="1.4" stroke-dasharray="8 8"/>
<rect x="3573" y="246" width="28" height="8" fill="#dcdcdc" rx="1" />
<rect x="3575" y="256" width="24" height="16" fill="#dcdcdc" rx="1" />
<rect x="3583" y="259" width="8" height="3.4" fill="#303030" rx="1.7" />
<text x="3615.6" y="268.2" font-size="22" fill="#c8c8c8" textLength="175" lengthAdjust="spacing" >Scene Collection</text>
<path d="M3580 294.5 H3592 L3586 305.5 Z" fill="#c4c4c4" />
<rect x="3607" y="280.3" width="39.8" height="35.7" fill="#505050" rx="8" stroke="#707070" stroke-width="1.6" />
<rect x="3613" y="285.2" width="28" height="8" fill="#dcdcdc" rx="1" />
<rect x="3615" y="295.2" width="24" height="16" fill="#dcdcdc" rx="1" />
<rect x="3623" y="298.2" width="8" height="3.4" fill="#303030" rx="1.7" />
<text x="3655.7" y="308" font-size="22" fill="#c8c8c8" textLength="103.5" lengthAdjust="spacing" >Collection</text>
<rect x="4113" y="288" width="20" height="19.8" fill="#e6e6e6" rx="2.5" />
<path d="M4116.8 298 L4121.3 302.5 L4129.5 293.5" fill="none" stroke="#262626" stroke-width="3.2" />
<path d="M4149 297.3 Q4162 279.8 4175 297.3 Q4162 314.8 4149 297.3 Z" fill="#e6e6e6" />
<circle cx="4162" cy="297" r="6.6" fill="#282828" />
<circle cx="4162" cy="297" r="3.2" fill="#e6e6e6" />
<path d="M4189 290.5 H4195 L4197.5 286.5 H4206.5 L4209 290.5 H4215 V308.3 H4189 Z" fill="#e6e6e6" />
<circle cx="4202.5" cy="299" r="7.6" fill="#282828" />
<circle cx="4202.5" cy="299" r="5.6" fill="#e6e6e6" />
<circle cx="4202.5" cy="299" r="3.9" fill="#282828" />
<circle cx="4202.5" cy="299" r="3.9" fill="#e6e6e6" opacity="0" />
<circle cx="4202.5" cy="299" r="4.6" fill="none" stroke="#282828" stroke-width="0" />
<path d="M3620.2 334.7 H3632.2 L3626.2 345.7 Z" fill="#c4c4c4" />
<rect x="3647" y="319.8" width="40" height="36.1" fill="#5a6d96" rx="8" stroke="#7888ad" stroke-width="1.6" />
<path d="M3664.2 340.6 V326.5 M3664.2 340.6 H3680 M3664.2 340.6 L3655 351" fill="none" stroke="#d68a4e" stroke-width="4.6" stroke-linecap="round" />
<text x="3696" y="347.8" font-size="22" fill="#f0a42c" textLength="63.2" lengthAdjust="spacing" >Empty</text>
<path d="M4149 337.3 Q4162 319.8 4175 337.3 Q4162 354.8 4149 337.3 Z" fill="#e6e6e6" />
<circle cx="4162" cy="337" r="6.6" fill="#334d80" />
<circle cx="4162" cy="337" r="3.2" fill="#e6e6e6" />
<path d="M4189 330.5 H4195 L4197.5 326.5 H4206.5 L4209 330.5 H4215 V348.3 H4189 Z" fill="#e6e6e6" />
<circle cx="4202.5" cy="339" r="7.6" fill="#334d80" />
<circle cx="4202.5" cy="339" r="5.6" fill="#e6e6e6" />
<circle cx="4202.5" cy="339" r="3.9" fill="#334d80" />
<circle cx="4202.5" cy="339" r="3.9" fill="#e6e6e6" opacity="0" />
<circle cx="4202.5" cy="339" r="4.6" fill="none" stroke="#334d80" stroke-width="0" />
<path d="M3661.2 373.5 L3672.7 379 L3661.2 384.5 Z" fill="#c4c4c4" />
<path d="M3695.7999999999997 367 H3718.6 L3707.2 389 Z" fill="none" stroke="#c8834a" stroke-width="5" stroke-linejoin="round" />
<text x="3736" y="388" font-size="22" fill="#c8c8c8" textLength="36.7" lengthAdjust="spacing" >Box</text>
<path d="M3837.5 364.3 Q3828 366.3 3829 376.3 L3821.5 384.3 A3.9 3.9 0 0 0 3827.5 390.3 L3835.5 382.8 Q3845.5 382.8 3847.5 373.8 L3845 371.8 L3841 375.8 Q3836.5 375.3 3834.5 370.3 L3839.5 366.3 Z" fill="none" stroke="#6a90e2" stroke-width="2.2" stroke-linejoin="round" />
<path d="M3863.3 367.3 H3885.3 L3874.3 388.3 Z" fill="none" stroke="#1fbf95" stroke-width="2" />
<rect x="3860.8" y="364.8" width="6" height="6" fill="#282828" stroke="#1fbf95" stroke-width="2" />
<rect x="3881.8" y="364.8" width="6" height="6" fill="#282828" stroke="#1fbf95" stroke-width="2" />
<rect x="3871.3" y="385.3" width="6" height="6" fill="#282828" stroke="#1fbf95" stroke-width="2" />
<path d="M4149 377 Q4162 359.5 4175 377 Q4162 394.5 4149 377 Z" fill="#e6e6e6" />
<circle cx="4162" cy="376.7" r="6.6" fill="#282828" />
<circle cx="4162" cy="376.7" r="3.2" fill="#e6e6e6" />
<path d="M4189 370.2 H4195 L4197.5 366.2 H4206.5 L4209 370.2 H4215 V388.0 H4189 Z" fill="#e6e6e6" />
<circle cx="4202.5" cy="378.7" r="7.6" fill="#282828" />
<circle cx="4202.5" cy="378.7" r="5.6" fill="#e6e6e6" />
<circle cx="4202.5" cy="378.7" r="3.9" fill="#282828" />
<circle cx="4202.5" cy="378.7" r="3.9" fill="#e6e6e6" opacity="0" />
<circle cx="4202.5" cy="378.7" r="4.6" fill="none" stroke="#282828" stroke-width="0" />
<path d="M3661.2 413.2 L3672.7 418.7 L3661.2 424.2 Z" fill="#c4c4c4" />
<path d="M3695.7999999999997 407 H3718.6 L3707.2 429 Z" fill="none" stroke="#c8834a" stroke-width="5" stroke-linejoin="round" />
<text x="3736" y="428" font-size="22" fill="#c8c8c8" textLength="71" lengthAdjust="spacing" >Deckel</text>
<path d="M3853.5 405 H3863 Q3870 405 3867 411 L3861 418 Q3857.5 424.6 3865 424.6 H3880 M3873.5 418.5 L3880.5 424.6 L3873.5 431" fill="none" stroke="#a8a8a8" stroke-width="2.2" stroke-linecap="round" stroke-linejoin="round" />
<path d="M3910.8 404.3 Q3901.3 406.3 3902.3 416.3 L3894.8 424.3 A3.9 3.9 0 0 0 3900.8 430.3 L3908.8 422.8 Q3918.8 422.8 3920.8 413.8 L3918.3 411.8 L3914.3 415.8 Q3909.8 415.3 3907.8 410.3 L3912.8 406.3 Z" fill="none" stroke="#6a90e2" stroke-width="2.2" stroke-linejoin="round" />
<path d="M3936.2 407.5 H3958.2 L3947.2 428.5 Z" fill="none" stroke="#1fbf95" stroke-width="2" />
<rect x="3933.7" y="405" width="6" height="6" fill="#282828" stroke="#1fbf95" stroke-width="2" />
<rect x="3954.7" y="405" width="6" height="6" fill="#282828" stroke="#1fbf95" stroke-width="2" />
<rect x="3944.2" y="425.5" width="6" height="6" fill="#282828" stroke="#1fbf95" stroke-width="2" />
<path d="M4149 417 Q4162 399.5 4175 417 Q4162 434.5 4149 417 Z" fill="#e6e6e6" />
<circle cx="4162" cy="416.7" r="6.6" fill="#2b2b2b" />
<circle cx="4162" cy="416.7" r="3.2" fill="#e6e6e6" />
<path d="M4189 410.2 H4195 L4197.5 406.2 H4206.5 L4209 410.2 H4215 V428.0 H4189 Z" fill="#e6e6e6" />
<circle cx="4202.5" cy="418.7" r="7.6" fill="#2b2b2b" />
<circle cx="4202.5" cy="418.7" r="5.6" fill="#e6e6e6" />
<circle cx="4202.5" cy="418.7" r="3.9" fill="#2b2b2b" />
<circle cx="4202.5" cy="418.7" r="3.9" fill="#e6e6e6" opacity="0" />
<circle cx="4202.5" cy="418.7" r="4.6" fill="none" stroke="#2b2b2b" stroke-width="0" />
</g>
<rect x="3544.4" y="976.8" width="62.2" height="38.5" fill="#2b2b2b" rx="7" stroke="#3e3e3e" stroke-width="1.6" />
<rect x="3552.9" y="981.9" width="27.8" height="11.8" fill="#e6e6e6" rx="5.9" />
<rect x="3552.9" y="998" width="27.8" height="11.8" fill="#e6e6e6" rx="5.9" />
<rect x="3565" y="984.2" width="13.4" height="7.2" fill="#2b2b2b" rx="3.6" />
<rect x="3571.5" y="1000.3" width="7" height="7.2" fill="#2b2b2b" rx="3.6" />
<path d="M3588.4 994.9 L3593.4 999.9 L3598.4 994.9" fill="none" stroke="#d9d9d9" stroke-width="2.6" stroke-linecap="round" stroke-linejoin="round" />
<rect x="3774.6" y="977" width="227.4" height="38.3" fill="#1d1d1d" rx="7" stroke="#3e3e3e" stroke-width="1.6" />
<circle cx="3800.8" cy="992" r="9" fill="none" stroke="#d9d9d9" stroke-width="2.2" />
<line x1="3794.5" y1="998.8" x2="3785" y2="1008" stroke="#d9d9d9" stroke-width="2.4" stroke-linecap="round" />
<rect x="4189" y="977" width="37.5" height="38.3" fill="#2b2b2b" rx="7" stroke="#3e3e3e" stroke-width="1.6" />
<path d="M4202.7 995 L4207.7 1000 L4212.7 995" fill="none" stroke="#d9d9d9" stroke-width="2.6" stroke-linecap="round" stroke-linejoin="round" />
<g clip-path="url(#pr)">
<rect x="3528" y="1022" width="57.5" height="1600" fill="#191919" />
<path d="M3585.5 1022 H3533 V1088 a6 6 0 0 0 6 6 H3585.5 Z" fill="#1e1e1e" />
<path d="M3585.5 1100.5 H3539 a6 6 0 0 0 -6 6 V1384 a6 6 0 0 0 6 6 H3585.5 Z" fill="#1e1e1e" />
<path d="M3585.5 1398 H3539 a6 6 0 0 0 -6 6 V1456 a6 6 0 0 0 6 6 H3585.5 Z" fill="#1e1e1e" />
<path d="M3585.5 1536 H3539 a6 6 0 0 0 -6 6 V1696 a6 6 0 0 0 6 6 H3585.5 Z" fill="#1e1e1e" />
<path d="M3585.5 1710 H3539 a6 6 0 0 0 -6 6 V1768 a6 6 0 0 0 6 6 H3585.5 Z" fill="#1e1e1e" />
<path d="M3585.5 1480 H3539 a6 6 0 0 0 -6 6 V1526 a6 6 0 0 0 6 6 H3585.5 Z" fill="#303030" />
<path d="M3550.5 1054 V1066" fill="none" stroke="#a8a8a8" stroke-width="2.2" />
<circle cx="3550.5" cy="1073.5" r="5.2" fill="#a8a8a8" />
<rect x="3546" y="1066" width="9" height="3" fill="#a8a8a8" />
<path d="M3562.5 1053.5 V1058 a5 5 0 0 0 8 0 V1053.5" fill="none" stroke="#a8a8a8" stroke-width="3.4" />
<rect x="3564.3" y="1060" width="4.6" height="19.5" fill="#a8a8a8" rx="2.3" />
<circle cx="3566.6" cy="1076.3" r="1.1" fill="#1b1b1b" />
<rect x="3545" y="1127.8" width="28" height="22.2" fill="#a8a8a8" rx="2" />
<rect x="3552.5" y="1123.5" width="12.5" height="6" fill="#a8a8a8" rx="1.5" />
<rect x="3568" y="1124.5" width="4" height="1.8" fill="#a8a8a8" />
<rect x="3549" y="1133" width="14.5" height="13" fill="#1e1e1e" rx="1" />
<path d="M3550.5 1136.5 H3562 M3550.5 1139.7 H3562 M3550.5 1142.9 H3562" fill="none" stroke="#777" stroke-width="1.6" />
<circle cx="3568.3" cy="1135.5" r="2" fill="#1e1e1e" />
<circle cx="3568.3" cy="1143.5" r="2" fill="#1e1e1e" />
<path d="M3545 1182 a3 3 0 0 1 3 -3 H3570 a3 3 0 0 1 3 3 V1194 H3568 V1188.5 H3550 V1194 H3545 Z" fill="#a8a8a8" />
<rect x="3551" y="1190.5" width="16" height="17" fill="#8a8a8a" />
<path d="M3553 1205 L3559 1196.5 L3565 1205 Z" fill="#1e1e1e" />
<circle cx="3563.5" cy="1194.5" r="1.6" fill="#1e1e1e" />
<path d="M3548 1244 V1260 H3565 M3545 1247 V1263 H3562" fill="none" stroke="#a8a8a8" stroke-width="1.8" />
<rect x="3552" y="1238" width="20" height="19" fill="none" stroke="#a8a8a8" stroke-width="2" />
<path d="M3553 1256 L3560 1245 L3564 1251 L3566.5 1248 L3571 1256 Z" fill="#a8a8a8" />
<circle cx="3567.5" cy="1242.5" r="1.6" fill="#a8a8a8" />
<path d="M3546 1318 L3552.5 1296 L3559.5 1318 a6.8 6.8 0 0 1 -13.5 0 Z" fill="#a8a8a8" opacity="1" />
<circle cx="3568.5" cy="1298.5" r="3.6" fill="#a8a8a8" />
<circle cx="3564.5" cy="1313.5" r="6.6" fill="#1b1b1b" stroke="#a8a8a8" stroke-width="2.2" />
<line x1="3564.5" y1="1313.5" x2="3567" y2="1311" stroke="#a8a8a8" stroke-width="1.6" />
<circle cx="3558.5" cy="1362.5" r="12.5" fill="none" stroke="#c85a66" stroke-width="2.4" />
<path d="M3551 1356 q5 -4 8 0 q2 4 -3 6 q-5 1 -5 -6 Z M3559 1366 q5 -2 6 2 q-1 5 -5 5 q-3 -3 -1 -7 Z" fill="#c85a66" />
<line x1="3546.5" y1="1374.5" x2="3570.5" y2="1350.5" stroke="#c85a66" stroke-width="2" />
<rect x="3545" y="1422.5" width="27" height="6.5" fill="none" stroke="#dcdcdc" stroke-width="2" />
<path d="M3547 1431.5 V1447.5 H3570 V1431.5" fill="none" stroke="#dcdcdc" stroke-width="2.2" />
<rect x="3554.5" y="1434" width="8" height="3.6" fill="#dcdcdc" rx="1.5" />
<path d="M3545.0800000000004 1496.98 V1492.08 H3549.9800000000005 M3567.62 1492.08 H3572.52 V1496.98 M3572.52 1514.62 V1519.52 H3567.62 M3549.9800000000005 1519.52 H3545.0800000000004 V1514.62" fill="none" stroke="#b07a48" stroke-width="1.96" />
<rect x="3551.45" y="1498.45" width="14.7" height="14.7" fill="#e59a55" />
<circle cx="3557.5" cy="1562.5" r="11.5" fill="none" stroke="#5c86d6" stroke-width="2.8" stroke-dasharray="58 14" stroke-dashoffset="-3"/>
<circle cx="3557.5" cy="1562.5" r="5.6" fill="#5c86d6" />
<circle cx="3569" cy="1551.5" r="3.6" fill="#5c86d6" />
<circle cx="3555.5" cy="1620.5" r="10.5" fill="none" stroke="#5c86d6" stroke-width="2.6" />
<circle cx="3555.5" cy="1620.5" r="4.2" fill="none" stroke="#5c86d6" stroke-width="2.6" />
<path d="M3548 1612.5 L3563 1604 a5.5 5.5 0 0 1 7 7.5 L3564.5 1626" fill="none" stroke="#5c86d6" stroke-width="2.6" stroke-linejoin="round" />
<circle cx="3566.5" cy="1608" r="1.4" fill="#5c86d6" />
<path d="M3554 1679 V1659.7 M3554 1679 H3573 M3554 1679 L3545.3 1687.8" fill="none" stroke="#1fbf95" stroke-width="2.4" />
<rect x="3545" y="1732" width="27.5" height="27.5" fill="#1a1a1a" />
<rect x="3545" y="1732" width="6.875" height="6.875" fill="#b4545f" />
<rect x="3558.75" y="1732" width="6.875" height="6.875" fill="#b4545f" />
<rect x="3551.88" y="1738.88" width="6.875" height="6.875" fill="#b4545f" />
<rect x="3565.62" y="1738.88" width="6.875" height="6.875" fill="#b4545f" />
<rect x="3545" y="1745.75" width="6.875" height="6.875" fill="#b4545f" />
<rect x="3558.75" y="1745.75" width="6.875" height="6.875" fill="#b4545f" />
<rect x="3551.88" y="1752.62" width="6.875" height="6.875" fill="#b4545f" />
<rect x="3565.62" y="1752.62" width="6.875" height="6.875" fill="#b4545f" />
<rect x="3545" y="1732" width="27.5" height="27.5" fill="none" stroke="#b4545f" stroke-width="1.8" />
<path d="M3607.2 1049.0 V1044.0 H3612.2 M3630.2 1044.0 H3635.2 V1049.0 M3635.2 1067.0 V1072.0 H3630.2 M3612.2 1072.0 H3607.2 V1067.0" fill="none" stroke="#a4a4a4" stroke-width="2" />
<rect x="3613.7" y="1050.5" width="15" height="15" fill="#d9d9d9" />
<text x="3654.2" y="1066.3" font-size="22" fill="#e6e6e6" textLength="63.3" lengthAdjust="spacing" >Empty</text>
<path d="M4201 1053 L4208.5 1045.5 L4216 1053 L4213 1056 L4211.5 1054.5 L4205.5 1062.5 L4199.5 1056.5 L4207.5 1050.5 L4206 1049 Z M4202 1060 L4194.5 1068" fill="none" stroke="#8a8a8a" stroke-width="2" stroke-linecap="round" stroke-linejoin="round" />
<rect x="3601.8" y="1111" width="625.2" height="38.4" fill="#1d1d1d" rx="7" stroke="#3e3e3e" stroke-width="1.6" />
<path d="M3601.8 1118 a7 7 0 0 1 7 -7 H3663.8 V1149.4 H3608.8 a7 7 0 0 1 -7 -7 Z" fill="#2b2b2b" stroke="#3e3e3e" stroke-width="1.6" />
<path d="M3611.0 1121.1 V1116.1 H3616.0 M3634.0 1116.1 H3639.0 V1121.1 M3639.0 1139.1 V1144.1 H3634.0 M3616.0 1144.1 H3611.0 V1139.1" fill="none" stroke="#a4a4a4" stroke-width="2" />
<rect x="3617.5" y="1122.6" width="15" height="15" fill="#d9d9d9" />
<path d="M3646.7 1129 L3651.7 1134 L3656.7 1129" fill="none" stroke="#d9d9d9" stroke-width="2.6" stroke-linecap="round" stroke-linejoin="round" />
<text x="3680" y="1137.7" font-size="22" fill="#e6e6e6" textLength="63.7" lengthAdjust="spacing" >Empty</text>
<rect x="3601.3" y="1170.2" width="626.7" height="561.3" fill="#3d3d3d" rx="8" />
<path d="M3618 1191 L3626 1199 L3634 1191" fill="none" stroke="#c8c8c8" stroke-width="2" stroke-linecap="round" stroke-linejoin="round" />
<text x="3646.2" y="1203.6" font-size="22" fill="#e6e6e6" textLength="105" lengthAdjust="spacing" >Transform</text>
<rect x="4194" y="1190.5" width="2.4" height="2.4" fill="#202020" />
<rect x="4199.6" y="1190.5" width="2.4" height="2.4" fill="#202020" />
<rect x="4205.2" y="1190.5" width="2.4" height="2.4" fill="#202020" />
<rect x="4210.8" y="1190.5" width="2.4" height="2.4" fill="#202020" />
<rect x="4194" y="1196.1" width="2.4" height="2.4" fill="#202020" />
<rect x="4199.6" y="1196.1" width="2.4" height="2.4" fill="#202020" />
<rect x="4205.2" y="1196.1" width="2.4" height="2.4" fill="#202020" />
<rect x="4210.8" y="1196.1" width="2.4" height="2.4" fill="#202020" />
<path d="M3857 1237.5 H4130 V1354.5 H3857 a7 7 0 0 1 -7 -7 V1244.5 a7 7 0 0 1 7 -7 Z" fill="#545454" />
<line x1="3856" y1="1355.8" x2="4124" y2="1355.8" stroke="#2e2e2e" stroke-width="1.8" opacity="0.8" />
<line x1="3850" y1="1276" x2="4130" y2="1276" stroke="#3d3d3d" stroke-width="2" />
<line x1="3850" y1="1315.5" x2="4130" y2="1315.5" stroke="#3d3d3d" stroke-width="2" />
<text x="3829.5" y="1263.8" font-size="22" fill="#e6e6e6" text-anchor="end" >Location X</text>
<text x="3990" y="1263.8" font-size="22" fill="#e6e6e6" text-anchor="middle" textLength="38" lengthAdjust="spacing" >0 m</text>
<path d="M4138 1255.5 V1251.5 a6.3 6.3 0 0 1 12.6 0 V1254.0" fill="none" stroke="#a6a6a6" stroke-width="2" stroke-linecap="round" />
<rect x="4147.5" y="1254.5" width="17" height="10.5" fill="none" rx="1" stroke="#a6a6a6" stroke-width="2" />
<rect x="4154.7" y="1257.7" width="2.6" height="4.2" fill="#a6a6a6" />
<circle cx="4192" cy="1256.5" r="4" fill="#e0e0e0" />
<text x="3829.5" y="1303.3" font-size="22" fill="#e6e6e6" text-anchor="end" >Y</text>
<text x="3990" y="1303.3" font-size="22" fill="#e6e6e6" text-anchor="middle" textLength="38" lengthAdjust="spacing" >0 m</text>
<path d="M4138 1295.0 V1291.0 a6.3 6.3 0 0 1 12.6 0 V1293.5" fill="none" stroke="#a6a6a6" stroke-width="2" stroke-linecap="round" />
<rect x="4147.5" y="1294" width="17" height="10.5" fill="none" rx="1" stroke="#a6a6a6" stroke-width="2" />
<rect x="4154.7" y="1297.2" width="2.6" height="4.2" fill="#a6a6a6" />
<circle cx="4192" cy="1296" r="4" fill="#e0e0e0" />
<text x="3829.5" y="1342.8" font-size="22" fill="#e6e6e6" text-anchor="end" >Z</text>
<text x="3990" y="1342.8" font-size="22" fill="#e6e6e6" text-anchor="middle" textLength="38" lengthAdjust="spacing" >0 m</text>
<path d="M4138 1334.5 V1330.5 a6.3 6.3 0 0 1 12.6 0 V1333.0" fill="none" stroke="#a6a6a6" stroke-width="2" stroke-linecap="round" />
<rect x="4147.5" y="1333.5" width="17" height="10.5" fill="none" rx="1" stroke="#a6a6a6" stroke-width="2" />
<rect x="4154.7" y="1336.7" width="2.6" height="4.2" fill="#a6a6a6" />
<circle cx="4192" cy="1335.5" r="4" fill="#e0e0e0" />
<path d="M3857 1367.5 H4130 V1484.5 H3857 a7 7 0 0 1 -7 -7 V1374.5 a7 7 0 0 1 7 -7 Z" fill="#545454" />
<line x1="3856" y1="1485.8" x2="4124" y2="1485.8" stroke="#2e2e2e" stroke-width="1.8" opacity="0.8" />
<line x1="3850" y1="1406" x2="4130" y2="1406" stroke="#3d3d3d" stroke-width="2" />
<line x1="3850" y1="1445.5" x2="4130" y2="1445.5" stroke="#3d3d3d" stroke-width="2" />
<text x="3829.5" y="1393.8" font-size="22" fill="#e6e6e6" text-anchor="end" >Rotation X</text>
<text x="3990" y="1393.8" font-size="22" fill="#e6e6e6" text-anchor="middle" textLength="23" lengthAdjust="spacing" >0°</text>
<path d="M4138 1385.5 V1381.5 a6.3 6.3 0 0 1 12.6 0 V1384.0" fill="none" stroke="#a6a6a6" stroke-width="2" stroke-linecap="round" />
<rect x="4147.5" y="1384.5" width="17" height="10.5" fill="none" rx="1" stroke="#a6a6a6" stroke-width="2" />
<rect x="4154.7" y="1387.7" width="2.6" height="4.2" fill="#a6a6a6" />
<circle cx="4192" cy="1386.5" r="4" fill="#e0e0e0" />
<text x="3829.5" y="1433.3" font-size="22" fill="#e6e6e6" text-anchor="end" >Y</text>
<text x="3990" y="1433.3" font-size="22" fill="#e6e6e6" text-anchor="middle" textLength="23" lengthAdjust="spacing" >0°</text>
<path d="M4138 1425.0 V1421.0 a6.3 6.3 0 0 1 12.6 0 V1423.5" fill="none" stroke="#a6a6a6" stroke-width="2" stroke-linecap="round" />
<rect x="4147.5" y="1424" width="17" height="10.5" fill="none" rx="1" stroke="#a6a6a6" stroke-width="2" />
<rect x="4154.7" y="1427.2" width="2.6" height="4.2" fill="#a6a6a6" />
<circle cx="4192" cy="1426" r="4" fill="#e0e0e0" />
<text x="3829.5" y="1472.8" font-size="22" fill="#e6e6e6" text-anchor="end" >Z</text>
<text x="3990" y="1472.8" font-size="22" fill="#e6e6e6" text-anchor="middle" textLength="96" lengthAdjust="spacing" >-99.495°</text>
<path d="M4138 1464.5 V1460.5 a6.3 6.3 0 0 1 12.6 0 V1463.0" fill="none" stroke="#a6a6a6" stroke-width="2" stroke-linecap="round" />
<rect x="4147.5" y="1463.5" width="17" height="10.5" fill="none" rx="1" stroke="#a6a6a6" stroke-width="2" />
<rect x="4154.7" y="1466.7" width="2.6" height="4.2" fill="#a6a6a6" />
<circle cx="4192" cy="1465.5" r="4" fill="#e0e0e0" />
<text x="3829.5" y="1524" font-size="22" fill="#e6e6e6" text-anchor="end" textLength="59" lengthAdjust="spacing" >Mode</text>
<rect x="3850" y="1498" width="280" height="36" fill="#282828" rx="7" stroke="#333" stroke-width="1" />
<line x1="3856" y1="1535.3" x2="4124" y2="1535.3" stroke="#2e2e2e" stroke-width="1.8" opacity="0.8" />
<text x="3864" y="1524" font-size="22" fill="#d9d9d9" textLength="102" lengthAdjust="spacing" >XYZ Euler</text>
<path d="M4113 1515 L4118 1520 L4123 1515" fill="none" stroke="#d9d9d9" stroke-width="2.6" stroke-linecap="round" stroke-linejoin="round" />
<circle cx="4192" cy="1516" r="4" fill="#e0e0e0" />
<path d="M3857 1547.5 H4130 V1664.5 H3857 a7 7 0 0 1 -7 -7 V1554.5 a7 7 0 0 1 7 -7 Z" fill="#545454" />
<line x1="3856" y1="1665.8" x2="4124" y2="1665.8" stroke="#2e2e2e" stroke-width="1.8" opacity="0.8" />
<line x1="3850" y1="1586" x2="4130" y2="1586" stroke="#3d3d3d" stroke-width="2" />
<line x1="3850" y1="1625.5" x2="4130" y2="1625.5" stroke="#3d3d3d" stroke-width="2" />
<text x="3829.5" y="1573.8" font-size="22" fill="#e6e6e6" text-anchor="end" >Scale X</text>
<text x="3990" y="1573.8" font-size="22" fill="#e6e6e6" text-anchor="middle" textLength="60" lengthAdjust="spacing" >0.091</text>
<path d="M4138 1565.5 V1561.5 a6.3 6.3 0 0 1 12.6 0 V1564.0" fill="none" stroke="#a6a6a6" stroke-width="2" stroke-linecap="round" />
<rect x="4147.5" y="1564.5" width="17" height="10.5" fill="none" rx="1" stroke="#a6a6a6" stroke-width="2" />
<rect x="4154.7" y="1567.7" width="2.6" height="4.2" fill="#a6a6a6" />
<circle cx="4192" cy="1566.5" r="4" fill="#e0e0e0" />
<text x="3829.5" y="1613.3" font-size="22" fill="#e6e6e6" text-anchor="end" >Y</text>
<text x="3990" y="1613.3" font-size="22" fill="#e6e6e6" text-anchor="middle" textLength="60" lengthAdjust="spacing" >0.091</text>
<path d="M4138 1605.0 V1601.0 a6.3 6.3 0 0 1 12.6 0 V1603.5" fill="none" stroke="#a6a6a6" stroke-width="2" stroke-linecap="round" />
<rect x="4147.5" y="1604" width="17" height="10.5" fill="none" rx="1" stroke="#a6a6a6" stroke-width="2" />
<rect x="4154.7" y="1607.2" width="2.6" height="4.2" fill="#a6a6a6" />
<circle cx="4192" cy="1606" r="4" fill="#e0e0e0" />
<text x="3829.5" y="1652.8" font-size="22" fill="#e6e6e6" text-anchor="end" >Z</text>
<text x="3990" y="1652.8" font-size="22" fill="#e6e6e6" text-anchor="middle" textLength="60" lengthAdjust="spacing" >0.091</text>
<path d="M4138 1644.5 V1640.5 a6.3 6.3 0 0 1 12.6 0 V1643.0" fill="none" stroke="#a6a6a6" stroke-width="2" stroke-linecap="round" />
<rect x="4147.5" y="1643.5" width="17" height="10.5" fill="none" rx="1" stroke="#a6a6a6" stroke-width="2" />
<rect x="4154.7" y="1646.7" width="2.6" height="4.2" fill="#a6a6a6" />
<circle cx="4192" cy="1645.5" r="4" fill="#e0e0e0" />
<path d="M3652.25 1700 L3659.75 1707.5 L3652.25 1715" fill="none" stroke="#c8c8c8" stroke-width="2" stroke-linecap="round" stroke-linejoin="round" />
<text x="3674" y="1716" font-size="22" fill="#e6e6e6" textLength="166.5" lengthAdjust="spacing" >Delta Transform</text>
<rect x="3601.3" y="1736" width="626.7" height="50" fill="#3d3d3d" rx="8" />
<path d="M3624.75 1754 L3632.25 1761.5 L3624.75 1769" fill="none" stroke="#c8c8c8" stroke-width="2" stroke-linecap="round" stroke-linejoin="round" />
<text x="3646" y="1770" font-size="22" fill="#e6e6e6" textLength="94.5" lengthAdjust="spacing" >Relations</text>
<rect x="4194" y="1757.5" width="2.4" height="2.4" fill="#202020" />
<rect x="4199.6" y="1757.5" width="2.4" height="2.4" fill="#202020" />
<rect x="4205.2" y="1757.5" width="2.4" height="2.4" fill="#202020" />
<rect x="4210.8" y="1757.5" width="2.4" height="2.4" fill="#202020" />
<rect x="4194" y="1763.1" width="2.4" height="2.4" fill="#202020" />
<rect x="4199.6" y="1763.1" width="2.4" height="2.4" fill="#202020" />
<rect x="4205.2" y="1763.1" width="2.4" height="2.4" fill="#202020" />
<rect x="4210.8" y="1763.1" width="2.4" height="2.4" fill="#202020" />
<rect x="3601.3" y="1790" width="626.7" height="50" fill="#3d3d3d" rx="8" />
<path d="M3624.75 1808 L3632.25 1815.5 L3624.75 1823" fill="none" stroke="#c8c8c8" stroke-width="2" stroke-linecap="round" stroke-linejoin="round" />
<text x="3646" y="1824" font-size="22" fill="#e6e6e6" textLength="116" lengthAdjust="spacing" >Collections</text>
<rect x="4194" y="1811.5" width="2.4" height="2.4" fill="#202020" />
<rect x="4199.6" y="1811.5" width="2.4" height="2.4" fill="#202020" />
<rect x="4205.2" y="1811.5" width="2.4" height="2.4" fill="#202020" />
<rect x="4210.8" y="1811.5" width="2.4" height="2.4" fill="#202020" />
<rect x="4194" y="1817.1" width="2.4" height="2.4" fill="#202020" />
<rect x="4199.6" y="1817.1" width="2.4" height="2.4" fill="#202020" />
<rect x="4205.2" y="1817.1" width="2.4" height="2.4" fill="#202020" />
<rect x="4210.8" y="1817.1" width="2.4" height="2.4" fill="#202020" />
<rect x="3601.3" y="1844" width="626.7" height="50" fill="#3d3d3d" rx="8" />
<path d="M3624.75 1862 L3632.25 1869.5 L3624.75 1877" fill="none" stroke="#c8c8c8" stroke-width="2" stroke-linecap="round" stroke-linejoin="round" />
<text x="3646" y="1878" font-size="22" fill="#e6e6e6" textLength="110.5" lengthAdjust="spacing" >Instancing</text>
<rect x="4194" y="1865.5" width="2.4" height="2.4" fill="#202020" />
<rect x="4199.6" y="1865.5" width="2.4" height="2.4" fill="#202020" />
<rect x="4205.2" y="1865.5" width="2.4" height="2.4" fill="#202020" />
<rect x="4210.8" y="1865.5" width="2.4" height="2.4" fill="#202020" />
<rect x="4194" y="1871.1" width="2.4" height="2.4" fill="#202020" />
<rect x="4199.6" y="1871.1" width="2.4" height="2.4" fill="#202020" />
<rect x="4205.2" y="1871.1" width="2.4" height="2.4" fill="#202020" />
<rect x="4210.8" y="1871.1" width="2.4" height="2.4" fill="#202020" />
<rect x="3601.3" y="1898" width="626.7" height="50" fill="#3d3d3d" rx="8" />
<path d="M3624.75 1916 L3632.25 1923.5 L3624.75 1931" fill="none" stroke="#c8c8c8" stroke-width="2" stroke-linecap="round" stroke-linejoin="round" />
<text x="3646" y="1932" font-size="22" fill="#e6e6e6" textLength="136" lengthAdjust="spacing" >Motion Paths</text>
<rect x="4194" y="1919.5" width="2.4" height="2.4" fill="#202020" />
<rect x="4199.6" y="1919.5" width="2.4" height="2.4" fill="#202020" />
<rect x="4205.2" y="1919.5" width="2.4" height="2.4" fill="#202020" />
<rect x="4210.8" y="1919.5" width="2.4" height="2.4" fill="#202020" />
<rect x="4194" y="1925.1" width="2.4" height="2.4" fill="#202020" />
<rect x="4199.6" y="1925.1" width="2.4" height="2.4" fill="#202020" />
<rect x="4205.2" y="1925.1" width="2.4" height="2.4" fill="#202020" />
<rect x="4210.8" y="1925.1" width="2.4" height="2.4" fill="#202020" />
<rect x="3601.3" y="1952" width="626.7" height="50" fill="#3d3d3d" rx="8" />
<path d="M3624.75 1970 L3632.25 1977.5 L3624.75 1985" fill="none" stroke="#c8c8c8" stroke-width="2" stroke-linecap="round" stroke-linejoin="round" />
<text x="3646" y="1986" font-size="22" fill="#e6e6e6" textLength="86.5" lengthAdjust="spacing" >Visibility</text>
<rect x="4194" y="1973.5" width="2.4" height="2.4" fill="#202020" />
<rect x="4199.6" y="1973.5" width="2.4" height="2.4" fill="#202020" />
<rect x="4205.2" y="1973.5" width="2.4" height="2.4" fill="#202020" />
<rect x="4210.8" y="1973.5" width="2.4" height="2.4" fill="#202020" />
<rect x="4194" y="1979.1" width="2.4" height="2.4" fill="#202020" />
<rect x="4199.6" y="1979.1" width="2.4" height="2.4" fill="#202020" />
<rect x="4205.2" y="1979.1" width="2.4" height="2.4" fill="#202020" />
<rect x="4210.8" y="1979.1" width="2.4" height="2.4" fill="#202020" />
<rect x="3601.3" y="2006" width="626.7" height="50" fill="#3d3d3d" rx="8" />
<path d="M3624.75 2024 L3632.25 2031.5 L3624.75 2039" fill="none" stroke="#c8c8c8" stroke-width="2" stroke-linecap="round" stroke-linejoin="round" />
<text x="3646" y="2040" font-size="22" fill="#e6e6e6" textLength="174.5" lengthAdjust="spacing" >Viewport Display</text>
<rect x="4194" y="2027.5" width="2.4" height="2.4" fill="#202020" />
<rect x="4199.6" y="2027.5" width="2.4" height="2.4" fill="#202020" />
<rect x="4205.2" y="2027.5" width="2.4" height="2.4" fill="#202020" />
<rect x="4210.8" y="2027.5" width="2.4" height="2.4" fill="#202020" />
<rect x="4194" y="2033.1" width="2.4" height="2.4" fill="#202020" />
<rect x="4199.6" y="2033.1" width="2.4" height="2.4" fill="#202020" />
<rect x="4205.2" y="2033.1" width="2.4" height="2.4" fill="#202020" />
<rect x="4210.8" y="2033.1" width="2.4" height="2.4" fill="#202020" />
<rect x="3601.3" y="2060" width="626.7" height="50" fill="#3d3d3d" rx="8" />
<path d="M3624.75 2078 L3632.25 2085.5 L3624.75 2093" fill="none" stroke="#c8c8c8" stroke-width="2" stroke-linecap="round" stroke-linejoin="round" />
<text x="3646" y="2094" font-size="22" fill="#e6e6e6" textLength="193" lengthAdjust="spacing" >Custom Properties</text>
<rect x="4194" y="2081.5" width="2.4" height="2.4" fill="#202020" />
<rect x="4199.6" y="2081.5" width="2.4" height="2.4" fill="#202020" />
<rect x="4205.2" y="2081.5" width="2.4" height="2.4" fill="#202020" />
<rect x="4210.8" y="2081.5" width="2.4" height="2.4" fill="#202020" />
<rect x="4194" y="2087.1" width="2.4" height="2.4" fill="#202020" />
<rect x="4199.6" y="2087.1" width="2.4" height="2.4" fill="#202020" />
<rect x="4205.2" y="2087.1" width="2.4" height="2.4" fill="#202020" />
<rect x="4210.8" y="2087.1" width="2.4" height="2.4" fill="#202020" />
</g>
<rect x="3449.5" y="138" width="382.5" height="39.5" fill="#1d1d1d" rx="7" stroke="#3e3e3e" stroke-width="1.6" />
<path d="M3449.5 145 a7 7 0 0 1 7 -7 H3512 V177.5 H3456.5 a7 7 0 0 1 -7 -7 Z" fill="#232323" stroke="#3e3e3e" stroke-width="1.6" />
<path d="M3459 165 L3466.5 144 L3474 165 a7.5 7.5 0 0 1 -15 0 Z" fill="#dcdcdc" />
<circle cx="3483" cy="148" r="3.8" fill="#dcdcdc" />
<circle cx="3478.5" cy="164.5" r="7" fill="#232323" stroke="#dcdcdc" stroke-width="2.2" />
<line x1="3478.5" y1="164.5" x2="3481.3" y2="161.7" stroke="#dcdcdc" stroke-width="1.6" />
<path d="M3494.5 157 L3499.5 162 L3504.5 157" fill="none" stroke="#d9d9d9" stroke-width="2.6" stroke-linecap="round" stroke-linejoin="round" />
<text x="3527.5" y="166" font-size="22" fill="#d9d9d9" textLength="63.5" lengthAdjust="spacing" >Scene</text>
<path d="M3728 150 L3735.5 142.5 L3743 150 L3740 153 L3738.5 151.5 L3732.5 159.5 L3726.5 153.5 L3734.5 147.5 L3733 146 Z M3729 157 L3717 170" fill="none" stroke="#6e6e6e" stroke-width="2" stroke-linecap="round" stroke-linejoin="round" />
<rect x="3751" y="138.8" width="40" height="38" fill="#4a4a4a" />
<path d="M3764 146.5 H3777 L3784.5 154 V165.5 H3764 Z M3777 146.5 V154 H3784.5 M3760 152 V170.5 H3779" fill="none" stroke="#c4c4c4" stroke-width="2" stroke-linejoin="round" />
<path d="M3791 138.8 H3825 a7 7 0 0 1 7 7 V170.5 a7 7 0 0 1 -7 7 H3791 Z" fill="#333333" />
<path d="M3804 150.5 L3819 165.5 M3819 150.5 L3804 165.5" fill="none" stroke="#555555" stroke-width="2.2" />
<rect x="3843" y="138" width="383.5" height="39.5" fill="#1d1d1d" rx="7" stroke="#3e3e3e" stroke-width="1.6" />
<path d="M3843 145 a7 7 0 0 1 7 -7 H3905.5 V177.5 H3850 a7 7 0 0 1 -7 -7 Z" fill="#232323" stroke="#3e3e3e" stroke-width="1.6" />
<path d="M3856 151.5 V167.5 H3873 M3853 154.5 V170.5 H3870" fill="none" stroke="#a8a8a8" stroke-width="1.8" />
<rect x="3860" y="145.5" width="20" height="19" fill="none" stroke="#d9d9d9" stroke-width="2" />
<path d="M3861 163.5 L3868 152.5 L3872 158.5 L3874.5 155.5 L3879 163.5 Z" fill="#d9d9d9" />
<circle cx="3875.5" cy="150" r="1.6" fill="#d9d9d9" />
<path d="M3888.5 157 L3893.5 162 L3898.5 157" fill="none" stroke="#d9d9d9" stroke-width="2.6" stroke-linecap="round" stroke-linejoin="round" />
<text x="3921" y="166" font-size="22" fill="#d9d9d9" textLength="107" lengthAdjust="spacing" >ViewLayer</text>
<rect x="4146" y="138.8" width="40" height="38" fill="#4a4a4a" />
<path d="M4158 146.5 H4171 L4178.5 154 V165.5 H4158 Z M4171 146.5 V154 H4178.5 M4154 152 V170.5 H4173" fill="none" stroke="#c4c4c4" stroke-width="2" stroke-linejoin="round" />
<path d="M4186 138.8 H4219.5 a7 7 0 0 1 7 7 V170.5 a7 7 0 0 1 -7 7 H4186 Z" fill="#333333" />
<path d="M4198.5 150.5 L4213.5 165.5 M4213.5 150.5 L4198.5 165.5" fill="none" stroke="#555555" stroke-width="2.2" />
</g>
<rect x="112.75" y="75.75" width="4130.5" height="2586.5" rx="21.5" fill="none" stroke="#6a6a6a" stroke-width="1.5" opacity="0.55"/>
</svg>
</body></html>
